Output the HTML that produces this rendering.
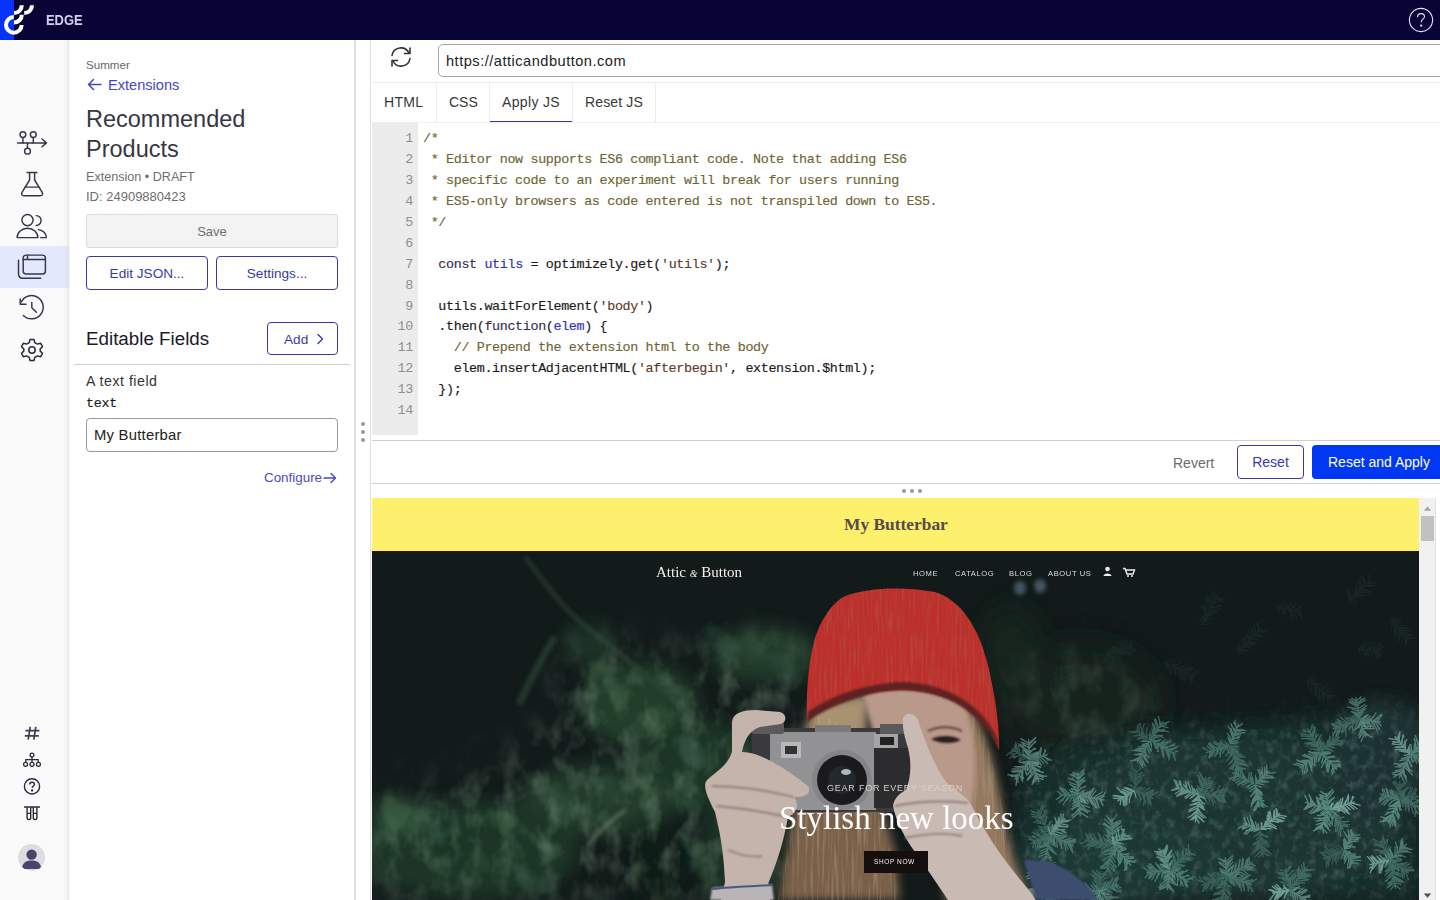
<!DOCTYPE html>
<html><head><meta charset="utf-8">
<style>
*{box-sizing:border-box;margin:0;padding:0}
html,body{width:1440px;height:900px;overflow:hidden;background:#fff;font-family:"Liberation Sans",sans-serif;position:relative}
.abs{position:absolute}
#hdr{left:0;top:0;width:1440px;height:40px;background:#080536}
#strip{left:0;top:0;width:14px;height:40px;background:#0632fa}
#edge{left:46px;top:11px;font-size:15px;line-height:17px;font-weight:bold;color:#d0d0ec;transform:scaleX(0.86);transform-origin:0 0}
#side{left:0;top:40px;width:70px;height:860px;background:linear-gradient(to right,#fafafa 0,#fafafa 63px,#f2f2f2 67px,#e8e8e8 69px,#ffffff 70px)}
#act{left:0;top:246px;width:69px;height:42px;background:linear-gradient(to right,#e3e8fc 0,#e3e8fc 64px,#dde0ec 69px)}
#panel{left:70px;top:40px;width:286px;height:860px;background:#fff;border-right:2px solid #e2e2e2}
.t{position:absolute;white-space:nowrap;line-height:1}
.btn{position:absolute;border:1.5px solid #3a3aa6;border-radius:4px;color:#3a3aa6;font-size:13px;text-align:center;background:#fff}
#main{left:356px;top:40px;width:1084px;height:860px;background:#fff}
.code{font-family:"Liberation Mono",monospace;font-size:12.8px}
.c{color:#6f6432}.v{color:#3030b4}.s{color:#5e3a2c}.k{color:#3a2d52}
</style></head><body>
<div id="hdr" class="abs"></div>
<div id="strip" class="abs"></div>
<div id="edge" class="abs">EDGE</div>

<div id="side" class="abs"></div>
<div id="act" class="abs"></div>
<div id="panel" class="abs"></div>
<!-- logo -->
<svg class="abs" style="left:0;top:0" width="40" height="40" viewBox="0 0 40 40" fill="none" stroke="#fff" stroke-width="4" stroke-linecap="butt">
<path d="M13.8 17.1 A7.8 7.8 0 1 0 21.6 24.9"/>
<path d="M14 22.5 A7.8 7.8 0 0 0 21.8 14.7"/>
<path d="M14 13.1 A7.8 7.8 0 0 0 21.8 5.3"/>
<path d="M24.2 13.1 A7.8 7.8 0 0 0 32 5.3"/>
</svg>
<svg class="abs" style="left:1405px;top:4px" width="32" height="32" viewBox="0 0 32 32" fill="none" stroke="#e2e2f6" stroke-width="1.1">
<circle cx="16" cy="16" r="11.6"/>
<path d="M12.6 13.2 C12.6 10.8 14.2 9.6 16.1 9.6 C18.1 9.6 19.5 10.9 19.5 12.7 C19.5 15 16.2 15.3 16.2 18.2"/>
<circle cx="16.2" cy="21.6" r="0.6" fill="#fff"/>
</svg>
<!-- sidebar icons -->
<svg class="abs" style="left:0;top:40px" width="70" height="860" viewBox="0 40 70 860" fill="none" stroke="#33354f" stroke-width="1.45" stroke-linecap="round" stroke-linejoin="round">
<path d="M17.5 142.9 H46.5 M42 139 L46.5 142.9 L42 146.8"/>
<circle cx="22.9" cy="134.6" r="2.9"/><path d="M22.9 137.5 V142.9"/>
<circle cx="33.3" cy="134.6" r="2.9"/><path d="M33.3 137.5 V142.9"/>
<circle cx="27.5" cy="151.2" r="2.9"/><path d="M27.5 142.9 V148.3"/>
<path d="M27.1 172.5 H36.9 M29.6 172.5 V180 L22 192.3 C21 194.2 21.8 195.8 24 195.8 H40.2 C42.4 195.8 43.2 194.2 42.2 192.3 L34.6 180 V172.5 M24.6 187.1 H39.6"/>
<circle cx="27.5" cy="220.1" r="5.6"/>
<path d="M17.1 237.6 A10.4 9.4 0 0 1 37.9 237.6 Z"/>
<path d="M36.2 215.6 A4.6 4.6 0 1 1 36.2 225.4"/>
<path d="M38.6 229.6 C43 230.3 46.4 233.5 46.4 237.6 H40.6"/>
<rect x="23.2" y="255.1" width="22.2" height="18.9" rx="3"/>
<path d="M23.2 259.5 H45.4 M27.5 255.1 V259.5"/>
<path d="M18.5 260.3 V273.5 C18.5 276.3 20 278.3 23 278.3 H40.7"/>
<path d="M21.2 302 A11.6 11.6 0 1 1 23.4 315.4"/>
<path d="M20.2 298.9 V304.2 H26"/>
<path d="M31.8 302.4 V307.8 L36.4 312.2"/>
</svg>
<svg class="abs" style="left:20px;top:338px" width="24" height="24" viewBox="0 0 24 24" fill="none" stroke="#2b2b40" stroke-width="1.5" stroke-linejoin="round">
<path d="M10 1.5 H14 L14.8 4.6 L17.4 6.1 L20.5 5.2 L22.5 8.7 L20.2 10.9 V13.1 L22.5 15.3 L20.5 18.8 L17.4 17.9 L14.8 19.4 L14 22.5 H10 L9.2 19.4 L6.6 17.9 L3.5 18.8 L1.5 15.3 L3.8 13.1 V10.9 L1.5 8.7 L3.5 5.2 L6.6 6.1 L9.2 4.6 Z"/>
<circle cx="12" cy="12" r="3.2"/>
</svg>
<svg class="abs" style="left:20px;top:722px" width="24" height="22" viewBox="0 0 24 22" fill="none" stroke="#3d3d5c" stroke-width="1.7"><path d="M10.2 4.8 L8.2 17.6 M15.8 4.8 L13.8 17.6 M5.4 8.6 H19.4 M4.8 13.8 H18.8"/></svg>
<svg class="abs" style="left:20px;top:750px" width="24" height="20" viewBox="0 0 24 20" fill="none" stroke="#2b2b40" stroke-width="1.3">
<circle cx="12" cy="5" r="1.9"/><path d="M12 6.9 V9.6 M5.8 12.3 V9.6 H18.2 V12.3 M12 9.6 V12.3"/>
<circle cx="5.6" cy="14.3" r="2"/><circle cx="12" cy="14.3" r="2"/><circle cx="18.4" cy="14.3" r="2"/>
</svg>
<svg class="abs" style="left:20px;top:774px" width="24" height="24" viewBox="0 0 24 24" fill="none" stroke="#2b2b40" stroke-width="1.4">
<circle cx="12" cy="12.4" r="7.6"/>
<path d="M9.6 10.6 C9.6 9 10.7 8.2 12 8.2 C13.4 8.2 14.4 9.1 14.4 10.3 C14.4 12 12.1 12.1 12.1 14"/>
<circle cx="12.1" cy="16.4" r="0.5" fill="#2b2b40"/>
</svg>
<svg class="abs" style="left:20px;top:802px" width="24" height="22" viewBox="0 0 24 22" fill="none" stroke="#2b2b40" stroke-width="1.4">
<path d="M4 5 H20 M7.1 5 V15.8 A1.8 1.8 0 0 0 10.7 15.8 V5 M13.3 5 V15.8 A1.8 1.8 0 0 0 16.9 15.8 V5 M7.1 11.4 H10.7 M13.3 11.4 H16.9"/>
</svg>
<svg class="abs" style="left:17px;top:843px" width="30" height="30" viewBox="0 0 30 30">
<defs><clipPath id="avc"><circle cx="14.6" cy="14.5" r="13.5"/></clipPath></defs>
<circle cx="14.6" cy="14.5" r="13.5" fill="#dedde2"/>
<g clip-path="url(#avc)" fill="#47446e"><circle cx="14.6" cy="11.6" r="5.2"/><path d="M5 26 C5 20 9 17.5 14.6 17.5 C20.2 17.5 24.2 20 24.2 26 Z"/></g>
</svg>


<!-- panel texts -->
<div class="t" style="left:86px;top:59px;font-size:11.6px;color:#666">Summer</div>
<svg class="abs" style="left:86px;top:77px" width="18" height="16" viewBox="0 0 18 16" fill="none" stroke="#4646c8" stroke-width="1.5" stroke-linecap="round" stroke-linejoin="round"><path d="M2.5 7.5 H15 M7.5 2.5 L2.5 7.5 L7.5 12.5"/></svg>
<div class="t" style="left:108px;top:78px;font-size:14.6px;color:#4646c8">Extensions</div>
<div class="t" style="left:86px;top:104px;font-size:23.5px;color:#363644;line-height:30px">Recommended<br>Products</div>
<div class="t" style="left:86px;top:171px;font-size:12.6px;color:#6e6e6e">Extension &bull; DRAFT</div>
<div class="t" style="left:86px;top:190px;font-size:13px;color:#6e6e6e">ID: 24909880423</div>
<div class="abs" style="left:86px;top:214px;width:252px;height:34px;background:#f3f3f3;border:1px solid #dcdcdc;border-radius:3px;color:#707070;font-size:13px;text-align:center;line-height:34px">Save</div>
<div class="btn" style="left:86px;top:256px;width:122px;height:34px;line-height:34px;font-size:13.6px">Edit JSON...</div>
<div class="btn" style="left:216px;top:256px;width:122px;height:34px;line-height:34px;font-size:13.6px">Settings...</div>
<div class="t" style="left:86px;top:330px;font-size:18.8px;color:#1a1a2a">Editable Fields</div>
<div class="btn" style="left:267px;top:322px;width:71px;height:33px"></div>
<div class="t" style="left:284px;top:333px;font-size:13.6px;color:#3a3aa6">Add</div>
<svg class="abs" style="left:315px;top:332px" width="11" height="14" viewBox="0 0 11 14" fill="none" stroke="#3a3aa6" stroke-width="1.4" stroke-linecap="round" stroke-linejoin="round"><path d="M3 2.5 L7.5 7 L3 11.5"/></svg>
<div class="abs" style="left:74px;top:364px;width:276px;height:1px;background:#cfcfcf"></div>
<div class="t" style="left:86px;top:374px;font-size:14.2px;letter-spacing:0.5px;color:#333">A text field</div>
<div class="t code" style="left:86px;top:396.5px;font-size:13.4px;letter-spacing:-0.3px;color:#1a1a1a;-webkit-text-stroke:0.15px currentColor">text</div>
<div class="abs" style="left:86px;top:418px;width:252px;height:34px;border:1px solid #999;border-radius:4px;font-size:14.8px;letter-spacing:0.25px;color:#222;padding-left:7px;line-height:32px">My Butterbar</div>
<div class="t" style="left:264px;top:471px;font-size:13.4px;color:#4a4ac0">Configure</div>
<svg class="abs" style="left:322px;top:471px" width="16" height="14" viewBox="0 0 16 14" fill="none" stroke="#4a4ac0" stroke-width="1.4" stroke-linecap="round" stroke-linejoin="round"><path d="M2 7 H13.5 M9 2.5 L13.5 7 L9 11.5"/></svg>


<!-- main -->
<div class="abs" style="left:370px;top:40px;width:1px;height:860px;background:#dfe1e1"></div>
<!-- refresh icon -->
<svg class="abs" style="left:388px;top:45px" width="26" height="24" viewBox="0 0 26 24" fill="none" stroke="#333" stroke-width="1.6" stroke-linecap="round" stroke-linejoin="round">
<path d="M4 10.5 A9 9 0 0 1 21 8"/><path d="M22 3 V8.5 H16.5"/>
<path d="M22 13.5 A9 9 0 0 1 5 16"/><path d="M4 21 V15.5 H9.5"/>
</svg>
<div class="abs" style="left:438px;top:44px;width:1010px;height:33px;border:1px solid #a5a5a5;border-radius:5px"></div>
<div class="t" style="left:446px;top:54px;font-size:14.6px;letter-spacing:0.5px;color:#222">https://atticandbutton.com</div>
<!-- tabs -->
<div class="abs" style="left:372px;top:82px;width:1068px;height:1px;background:#ececec"></div>
<div class="abs" style="left:436px;top:83px;width:1px;height:39px;background:#ececec"></div>
<div class="abs" style="left:489px;top:83px;width:1px;height:39px;background:#ececec"></div>
<div class="abs" style="left:572px;top:83px;width:1px;height:39px;background:#ececec"></div>
<div class="abs" style="left:655px;top:83px;width:1px;height:39px;background:#ececec"></div>
<div class="abs" style="left:372px;top:122px;width:1068px;height:1px;background:#f0f0f0"></div>
<div class="abs" style="left:490px;top:120.5px;width:82px;height:1.5px;background:#3a3aa6"></div>
<div class="t" style="left:384px;top:95px;font-size:14px;letter-spacing:0.3px;color:#383838">HTML</div>
<div class="t" style="left:449px;top:95px;font-size:14px;color:#383838">CSS</div>
<div class="t" style="left:502px;top:95px;font-size:14px;letter-spacing:0.35px;color:#383838">Apply JS</div>
<div class="t" style="left:585px;top:95px;font-size:14px;letter-spacing:0.15px;color:#383838">Reset JS</div>
<!-- editor -->
<div class="abs" style="left:372px;top:123px;width:46px;height:312px;background:#ececec"></div>
<div id="gut" class="abs code" style="left:372px;top:129.3px;width:41px;text-align:right;color:#8f8f8f;line-height:20.9px;font-size:13.4px;letter-spacing:-0.3px">1<br>2<br>3<br>4<br>5<br>6<br>7<br>8<br>9<br>10<br>11<br>12<br>13<br>14</div>
<pre id="src" class="abs code" style="left:423px;top:129.3px;color:#1a1a1a;line-height:20.9px;font-size:13.4px;letter-spacing:-0.36px;-webkit-text-stroke:0.15px currentColor"><span class="c">/*
 * Editor now supports ES6 compliant code. Note that adding ES6
 * specific code to an experiment will break for users running
 * ES5-only browsers as code entered is not transpiled down to ES5.
 */</span>

  <span class="k">const</span> <span class="v">utils</span> = optimizely.get(<span class="s">'utils'</span>);

  utils.waitForElement(<span class="s">'body'</span>)
  .then(<span class="k">function</span>(<span class="v">elem</span>) {
    <span class="c">// Prepend the extension html to the body</span>
    elem.insertAdjacentHTML(<span class="s">'afterbegin'</span>, extension.$html);
  });
</pre>
<!-- toolbar -->
<div class="abs" style="left:372px;top:440px;width:1068px;height:1px;background:#d0d0d0"></div>
<div class="abs" style="left:372px;top:483px;width:1068px;height:1px;background:#d0d0d0"></div>
<div class="t" style="left:1173px;top:456px;font-size:14px;color:#6b6b6b">Revert</div>
<div class="btn" style="left:1237px;top:445px;width:67px;height:34px;line-height:33px;font-size:14px">Reset</div>
<div class="abs" style="left:1312px;top:445px;width:140px;height:34px;background:#0037f0;border-radius:4px;color:#fff;font-size:14px;line-height:35px;padding-left:16px">Reset and Apply</div>
<!-- dots -->
<div class="abs" style="left:902px;top:489px;width:4px;height:4px;border-radius:2px;background:#9a9a9a"></div>
<div class="abs" style="left:910px;top:489px;width:4px;height:4px;border-radius:2px;background:#9a9a9a"></div>
<div class="abs" style="left:918px;top:489px;width:4px;height:4px;border-radius:2px;background:#9a9a9a"></div>
<div class="abs" style="left:361px;top:422px;width:4px;height:4px;border-radius:2px;background:#9a9a9a"></div>
<div class="abs" style="left:361px;top:430px;width:4px;height:4px;border-radius:2px;background:#9a9a9a"></div>
<div class="abs" style="left:361px;top:438px;width:4px;height:4px;border-radius:2px;background:#9a9a9a"></div>
<!-- preview -->
<div class="abs" style="left:372px;top:498px;width:1047px;height:53px;background:#fcf06c"></div>
<div class="t" style="left:844px;top:515.5px;font-family:'Liberation Serif',serif;font-size:17.4px;font-weight:bold;color:#574a4a">My Butterbar</div>
<div id="photo" class="abs" style="left:372px;top:551px;width:1047px;height:349px;background:#0f1819;overflow:hidden"></div>
<svg id="psvg" class="abs" style="left:372px;top:551px" width="1047" height="349" viewBox="372 551 1047 349">
<defs>
<filter id="b5" filterUnits="userSpaceOnUse" x="372" y="551" width="1047" height="349"><feGaussianBlur stdDeviation="5"/></filter>
<filter id="b16" filterUnits="userSpaceOnUse" x="300" y="480" width="1200" height="500"><feGaussianBlur stdDeviation="16"/></filter>
<filter id="b9" filterUnits="userSpaceOnUse" x="300" y="480" width="1200" height="500"><feGaussianBlur stdDeviation="9"/></filter>
<filter id="b2" filterUnits="userSpaceOnUse" x="372" y="551" width="1047" height="349"><feGaussianBlur stdDeviation="2"/></filter>
<filter id="b05" filterUnits="userSpaceOnUse" x="372" y="551" width="1047" height="349"><feGaussianBlur stdDeviation="0.6"/></filter>
<filter id="b1" filterUnits="userSpaceOnUse" x="372" y="551" width="1047" height="349"><feGaussianBlur stdDeviation="0.8"/></filter>
<filter id="needL" filterUnits="userSpaceOnUse" x="372" y="551" width="1047" height="349">
<feGaussianBlur in="SourceAlpha" stdDeviation="20" result="m"/>
<feTurbulence type="fractalNoise" baseFrequency="0.05 0.035" numOctaves="3" seed="7" result="n"/>
<feColorMatrix in="n" type="matrix" values="0 0 0 0 0.20  0 0 0 0 0.33  0 0 0 0 0.21  0 0 0 1.0 -0.42" result="c"/>
<feComposite in="c" in2="m" operator="in"/>
</filter>
<filter id="needR" filterUnits="userSpaceOnUse" x="372" y="551" width="1047" height="349">
<feGaussianBlur in="SourceAlpha" stdDeviation="16" result="m"/>
<feTurbulence type="fractalNoise" baseFrequency="0.12 0.1" numOctaves="3" seed="11" result="n"/>
<feColorMatrix in="n" type="matrix" values="0 0 0 0 0.20  0 0 0 0 0.34  0 0 0 0 0.31  0 0 0 0.8 -0.38" result="c"/>
<feComposite in="c" in2="m" operator="in"/>
</filter>
<filter id="knit" filterUnits="userSpaceOnUse" x="800" y="580" width="210" height="170">
<feTurbulence type="fractalNoise" baseFrequency="0.45 0.03" numOctaves="2" seed="2" result="n"/>
<feColorMatrix in="n" type="matrix" values="0 0 0 0 0.42  0 0 0 0 0.1  0 0 0 0 0.08  0 0 0 1.4 -0.62" result="c"/>
<feComposite in="c" in2="SourceAlpha" operator="in"/>
</filter>
<filter id="hairtx" filterUnits="userSpaceOnUse" x="760" y="680" width="300" height="220">
<feTurbulence type="fractalNoise" baseFrequency="0.35 0.02" numOctaves="2" seed="4" result="n"/>
<feColorMatrix in="n" type="matrix" values="0 0 0 0 0.75  0 0 0 0 0.62  0 0 0 0 0.48  0 0 0 1.5 -0.7" result="c"/>
<feComposite in="c" in2="SourceAlpha" operator="in"/>
</filter>
</defs>
<rect x="372" y="551" width="1047" height="349" fill="#121a1a"/>
<!-- left pine masses -->
<g filter="url(#b9)">
<ellipse cx="640" cy="705" rx="58" ry="42" fill="#223d2b"/>
<ellipse cx="765" cy="655" rx="55" ry="28" fill="#213b2b"/>
<ellipse cx="700" cy="765" rx="60" ry="45" fill="#1e3627"/>
<ellipse cx="590" cy="645" rx="28" ry="22" fill="#1b3025"/>
<ellipse cx="600" cy="800" rx="80" ry="35" fill="#203a2a"/>
<ellipse cx="470" cy="850" rx="110" ry="50" fill="#1c3427"/>
<ellipse cx="398" cy="815" rx="24" ry="16" fill="#33573a"/>
<ellipse cx="655" cy="860" rx="25" ry="45" fill="#111a16"/>
<ellipse cx="740" cy="850" rx="40" ry="55" fill="#1b3126"/>
</g>
<g filter="url(#needL)"><path d="M575 640 C620 650 690 660 760 640 C800 640 812 680 800 720 L790 900 L372 900 L372 800 C430 790 500 770 540 740 C560 700 565 660 575 640 Z" fill="#000"/></g>
<g id="lneedles" stroke-linecap="round" fill="none" filter="url(#b2)"><path d="M603.5 678.2L626.5 701.8M603.7 678.5L611.2 679.0M603.7 678.5L602.3 685.6M605.1 679.8L613.7 678.9M605.1 679.8L603.1 687.4M607.3 682.1L617.5 679.4M607.3 682.1L609.2 692.8M609.0 683.9L618.1 679.8M609.0 683.9L609.3 692.1M610.4 685.3L619.7 686.2M610.4 685.3L607.6 692.1M612.4 687.3L619.5 684.7M612.4 687.3L611.2 695.3M614.2 689.2L626.7 688.1M614.2 689.2L612.8 697.3M616.1 691.1L627.0 687.2M616.1 691.1L615.1 701.1M617.9 693.0L631.1 693.8M617.9 693.0L617.4 700.3M619.8 694.9L627.7 693.8M619.8 694.9L615.6 705.6M621.6 696.8L633.4 694.8M621.6 696.8L621.2 708.6M623.5 698.7L629.0 694.6M623.5 698.7L618.8 706.3" stroke="#37583f" opacity="0.59" stroke-width="2.0"/>
<path d="M647.6 710.5L672.4 719.5M647.9 710.6L652.4 707.4M647.9 710.6L650.6 716.4M650.2 711.4L659.0 705.5M650.2 711.4L652.3 721.4M652.2 712.2L662.4 708.8M652.2 712.2L656.8 721.4M655.4 713.3L667.0 709.3M655.4 713.3L656.8 720.8M657.0 713.9L663.2 703.9M657.0 713.9L660.0 724.6M659.6 714.9L667.4 711.7M659.6 714.9L664.6 727.8M662.4 715.9L670.5 712.5M662.4 715.9L668.1 724.5M664.3 716.6L673.6 711.5M664.3 716.6L670.2 727.6M667.6 717.8L674.9 711.7M667.6 717.8L671.1 723.1M670.0 718.6L674.7 715.1M670.0 718.6L671.4 727.9" stroke="#37583f" opacity="0.53" stroke-width="2.0"/>
<path d="M674.1 737.9L705.9 762.1M674.0 737.8L682.5 738.3M674.0 737.8L674.0 744.5M675.8 739.2L684.5 734.9M675.8 739.2L674.2 747.0M677.8 740.7L683.1 738.0M677.8 740.7L679.7 746.9M680.1 742.5L690.8 738.6M680.1 742.5L678.5 751.1M682.4 744.2L690.3 741.3M682.4 744.2L686.1 755.9M684.1 745.5L693.0 741.0M684.1 745.5L682.0 753.1M686.6 747.4L695.8 744.7M686.6 747.4L683.6 755.9M688.5 748.9L701.5 746.8M688.5 748.9L687.2 757.9M690.4 750.3L697.3 744.7M690.4 750.3L689.5 758.5M692.4 751.8L699.5 747.5M692.4 751.8L689.9 764.7M694.7 753.6L705.8 750.0M694.7 753.6L691.8 762.3M697.1 755.4L707.7 753.4M697.1 755.4L698.1 765.9M699.0 756.8L705.7 753.5M699.0 756.8L697.1 767.5M701.2 758.5L706.0 754.0M701.2 758.5L700.1 766.4M702.7 759.7L709.8 759.2M702.7 759.7L700.3 767.8" stroke="#2f5040" opacity="0.59" stroke-width="2.0"/>
<path d="M627.0 755.4L653.0 764.6M627.4 755.5L632.7 752.6M627.4 755.5L627.2 761.9M629.3 756.2L634.1 749.9M629.3 756.2L631.0 761.7M631.9 757.1L639.8 749.8M631.9 757.1L636.2 768.0M634.0 757.9L642.5 749.3M634.0 757.9L638.5 765.6M636.4 758.7L648.5 753.6M636.4 758.7L638.6 765.7M639.2 759.7L649.0 755.3M639.2 759.7L641.5 768.8M642.0 760.7L650.1 753.1M642.0 760.7L642.0 771.4M644.6 761.6L651.6 752.9M644.6 761.6L646.2 772.1M646.8 762.4L653.3 755.2M646.8 762.4L646.9 769.9M649.1 763.2L654.4 755.2M649.1 763.2L647.6 772.4" stroke="#37583f" opacity="0.61" stroke-width="2.0"/>
<path d="M669.4 792.2L690.6 807.8M669.5 792.3L676.9 790.9M669.5 792.3L669.6 801.9M671.5 793.8L679.9 791.9M671.5 793.8L670.8 799.8M673.6 795.3L684.9 793.3M673.6 795.3L674.2 802.3M675.7 796.8L684.5 792.7M675.7 796.8L677.1 807.3M678.1 798.6L685.8 798.2M678.1 798.6L680.5 810.4M679.8 799.8L688.2 797.7M679.8 799.8L678.7 811.3M681.8 801.3L692.0 799.5M681.8 801.3L682.2 812.3M683.8 802.8L694.6 801.2M683.8 802.8L681.8 813.4M686.5 804.8L697.1 803.3M686.5 804.8L684.5 812.5M688.6 806.3L698.8 805.9M688.6 806.3L690.8 815.4" stroke="#2a4636" opacity="0.61" stroke-width="2.0"/>
<path d="M589.4 662.9L610.6 677.1M589.5 663.1L598.3 661.3M589.5 663.1L590.9 669.8M591.8 664.6L600.5 662.1M591.8 664.6L591.1 674.6M593.9 666.0L603.1 660.4M593.9 666.0L592.1 674.9M595.6 667.1L603.1 664.9M595.6 667.1L596.2 677.4M597.7 668.5L604.1 663.6M597.7 668.5L598.4 678.2M599.9 670.0L607.9 667.5M599.9 670.0L602.0 680.3M602.2 671.5L608.7 666.7M602.2 671.5L601.2 679.4M604.8 673.2L615.5 667.1M604.8 673.2L605.2 683.4M606.6 674.3L612.1 670.2M606.6 674.3L605.9 685.7" stroke="#37583f" opacity="0.61" stroke-width="2.0"/>
<path d="M736.8 643.7L763.2 656.3M737.0 643.8L743.4 638.0M737.0 643.8L740.1 650.5M738.7 644.6L746.6 641.0M738.7 644.6L740.0 653.4M741.3 645.9L748.7 640.5M741.3 645.9L741.7 655.5M744.0 647.1L749.8 643.4M744.0 647.1L743.9 655.4M746.1 648.1L755.0 644.6M746.1 648.1L751.6 659.8M748.6 649.3L759.1 644.6M748.6 649.3L745.8 662.2M750.5 650.2L757.5 646.1M750.5 650.2L750.1 661.4M752.9 651.4L759.7 647.6M752.9 651.4L751.6 662.1M755.6 652.7L764.8 647.2M755.6 652.7L757.3 663.6M757.7 653.7L763.9 651.5M757.7 653.7L759.9 662.0M760.6 655.1L767.8 647.1M760.6 655.1L760.5 665.4" stroke="#2a4636" opacity="0.66" stroke-width="2.0"/>
<path d="M768.7 654.0L791.3 676.0M768.4 653.7L773.9 652.0M768.4 653.7L765.1 661.3M770.2 655.5L779.6 652.6M770.2 655.5L770.1 662.8M772.1 657.3L781.5 655.9M772.1 657.3L769.5 667.0M774.5 659.6L781.8 659.1M774.5 659.6L772.9 667.9M776.1 661.2L785.6 656.0M776.1 661.2L773.0 668.8M777.8 662.9L788.5 663.6M777.8 662.9L775.4 674.6M779.9 664.9L788.1 664.9M779.9 664.9L781.5 674.7M781.9 666.8L789.5 661.9M781.9 666.8L777.3 675.6M783.5 668.4L795.3 664.2M783.5 668.4L779.0 679.8M785.7 670.5L795.7 666.2M785.7 670.5L785.4 678.0M787.5 672.3L797.1 668.9M787.5 672.3L784.7 681.6M789.2 674.0L797.4 671.8M789.2 674.0L787.4 683.6" stroke="#2f5040" opacity="0.46" stroke-width="2.0"/>
<path d="M707.2 626.5L732.8 653.5M707.0 626.3L713.0 623.7M707.0 626.3L704.3 632.2M708.7 628.2L716.0 627.9M708.7 628.2L708.1 636.4M711.1 630.6L719.0 627.9M711.1 630.6L708.3 637.8M712.5 632.1L719.8 629.6M712.5 632.1L711.5 640.4M714.3 634.0L724.1 631.9M714.3 634.0L709.4 644.6M716.2 636.0L728.8 637.0M716.2 636.0L716.6 646.4M718.0 637.9L729.8 636.8M718.0 637.9L714.8 648.6M719.9 639.9L733.0 639.1M719.9 639.9L715.6 651.6M721.3 641.3L730.3 638.6M721.3 641.3L719.6 652.5M723.5 643.7L736.7 641.3M723.5 643.7L719.9 653.7M725.3 645.5L734.4 643.8M725.3 645.5L719.7 656.1M727.1 647.5L738.5 644.3M727.1 647.5L723.7 657.4M728.9 649.4L735.6 648.2M728.9 649.4L724.8 656.3M730.3 650.8L737.5 650.5M730.3 650.8L727.5 657.5" stroke="#2f5040" opacity="0.47" stroke-width="2.0"/>
<path d="M414.4 822.9L445.6 837.1M414.6 823.0L423.1 820.5M414.6 823.0L416.9 829.5M416.8 824.0L423.3 819.1M416.8 824.0L417.3 831.6M419.5 825.2L427.2 817.2M419.5 825.2L419.5 833.9M421.4 826.1L428.9 818.3M421.4 826.1L423.8 834.5M423.6 827.1L435.8 823.8M423.6 827.1L422.2 838.6M425.8 828.1L435.5 819.7M425.8 828.1L425.1 836.9M428.5 829.3L437.3 819.8M428.5 829.3L431.6 842.2M430.6 830.3L439.5 823.0M430.6 830.3L434.1 838.7M433.0 831.4L438.0 824.7M433.0 831.4L435.2 842.1M436.0 832.7L443.9 824.4M436.0 832.7L436.8 839.7M437.7 833.5L448.3 829.9M437.7 833.5L440.6 842.1M440.4 834.7L446.4 829.7M440.4 834.7L442.5 846.0M442.9 835.9L448.7 833.1M442.9 835.9L442.8 845.3" stroke="#2f5040" opacity="0.72" stroke-width="2.0"/>
<path d="M474.9 848.1L485.1 871.9M474.8 848.0L482.5 847.7M474.8 848.0L470.9 856.8M476.0 850.8L482.8 853.4M476.0 850.8L472.3 857.1M476.9 852.7L484.3 854.8M476.9 852.7L473.1 859.9M478.1 855.7L487.0 857.4M478.1 855.7L473.3 861.8M478.8 857.3L487.3 858.3M478.8 857.3L472.2 866.3M479.8 859.6L488.4 861.6M479.8 859.6L474.2 872.8M481.0 862.3L493.2 864.8M481.0 862.3L474.5 869.4M482.0 864.7L492.2 869.3M482.0 864.7L473.1 870.9M483.1 867.3L490.7 870.5M483.1 867.3L478.7 874.4" stroke="#37583f" opacity="0.45" stroke-width="2.0"/>
<path d="M518.1 866.1L541.9 893.9M517.8 865.9L525.3 864.5M517.8 865.9L516.7 871.5M519.9 868.3L528.2 864.5M519.9 868.3L515.9 877.7M521.5 870.2L528.8 869.6M521.5 870.2L518.6 877.3M523.4 872.4L530.6 871.9M523.4 872.4L518.2 882.7M524.9 874.0L533.1 872.7M524.9 874.0L517.5 883.1M526.6 876.1L535.5 877.7M526.6 876.1L521.9 885.8M528.4 878.2L536.6 878.7M528.4 878.2L529.7 892.4M530.2 880.3L542.3 876.6M530.2 880.3L525.6 891.4M531.8 882.1L542.5 882.8M531.8 882.1L531.4 893.5M533.1 883.6L543.7 881.2M533.1 883.6L531.4 890.9M535.1 886.0L545.3 888.1M535.1 886.0L532.6 896.2M536.8 887.9L545.7 886.0M536.8 887.9L529.7 896.6M538.3 889.7L549.1 888.8M538.3 889.7L535.8 897.6M540.4 892.0L549.3 890.5M540.4 892.0L535.6 899.1" stroke="#2f5040" opacity="0.63" stroke-width="2.0"/>
<path d="M603.8 777.0L616.2 803.0M603.7 776.7L612.7 775.3M603.7 776.7L599.5 780.5M605.1 779.7L615.5 781.2M605.1 779.7L597.5 785.3M606.2 782.0L615.3 784.0M606.2 782.0L602.8 789.9M607.0 783.7L613.8 786.5M607.0 783.7L600.3 790.1M608.2 786.2L616.3 784.9M608.2 786.2L603.1 795.4M609.2 788.4L618.9 787.7M609.2 788.4L604.8 797.1M610.3 790.7L624.2 791.3M610.3 790.7L604.5 801.9M611.4 793.0L623.8 797.4M611.4 793.0L607.9 804.3M612.8 795.8L625.1 796.1M612.8 795.8L606.1 801.2M614.0 798.4L622.3 796.6M614.0 798.4L606.4 806.8M615.1 800.7L625.1 801.5M615.1 800.7L612.4 807.2" stroke="#2a4636" opacity="0.71" stroke-width="2.0"/>
<path d="M692.6 845.8L707.4 874.2M692.6 845.7L700.4 846.5M692.6 845.7L689.8 854.6M693.9 848.2L699.8 849.9M693.9 848.2L688.0 854.1M695.0 850.4L702.1 853.4M695.0 850.4L692.1 856.3M696.1 852.5L704.2 851.4M696.1 852.5L691.0 863.0M697.6 855.5L708.7 859.6M697.6 855.5L692.0 864.0M698.5 857.0L708.2 858.0M698.5 857.0L691.5 865.3M699.8 859.6L711.3 859.0M699.8 859.6L691.3 869.9M700.9 861.6L711.5 861.1M700.9 861.6L691.8 871.0M702.1 864.0L713.0 864.2M702.1 864.0L698.0 874.2M703.5 866.7L711.1 868.0M703.5 866.7L701.9 876.2M704.6 868.8L715.2 869.4M704.6 868.8L701.0 877.5M705.8 871.2L712.3 870.2M705.8 871.2L703.8 878.3" stroke="#37583f" opacity="0.69" stroke-width="2.0"/>
<path d="M386.0 798.5L404.0 825.5M386.0 798.5L392.9 797.8M386.0 798.5L383.9 806.4M387.5 800.8L395.5 800.4M387.5 800.8L381.7 809.4M388.7 802.5L395.4 801.6M388.7 802.5L382.7 812.0M390.1 804.6L397.0 804.9M390.1 804.6L385.1 815.2M392.0 807.6L405.1 806.8M392.0 807.6L388.9 814.7M393.4 809.6L402.4 808.8M393.4 809.6L387.7 822.0M394.5 811.3L408.9 814.4M394.5 811.3L386.8 823.1M396.3 814.0L408.7 809.2M396.3 814.0L390.7 822.4M397.3 815.5L409.6 814.9M397.3 815.5L391.8 823.6M399.0 818.1L408.5 816.3M399.0 818.1L395.4 826.9M400.5 820.2L408.2 819.4M400.5 820.2L394.4 827.1M402.0 822.5L411.1 822.5M402.0 822.5L401.2 828.6" stroke="#37583f" opacity="0.68" stroke-width="2.0"/>
<path d="M551.8 783.8L568.2 816.2M551.9 784.0L558.3 782.1M551.9 784.0L548.8 792.7M552.9 785.9L558.7 785.6M552.9 785.9L550.7 791.3M553.9 788.1L561.5 787.4M553.9 788.1L550.8 793.9M555.4 790.9L565.1 794.0M555.4 790.9L553.6 798.7M556.6 793.2L568.5 794.7M556.6 793.2L553.9 801.7M557.5 795.1L568.3 797.7M557.5 795.1L549.4 805.6M558.7 797.5L567.7 798.6M558.7 797.5L549.8 808.2M560.2 800.3L568.3 802.8M560.2 800.3L556.5 807.8M561.1 802.2L570.4 804.1M561.1 802.2L558.0 812.5M562.2 804.3L570.0 803.7M562.2 804.3L558.9 811.9M563.6 807.0L574.5 807.0M563.6 807.0L561.7 815.8M564.5 808.9L573.8 809.1M564.5 808.9L560.0 815.9M565.8 811.4L575.9 815.0M565.8 811.4L561.2 819.8M566.9 813.6L577.2 815.2M566.9 813.6L562.2 822.8" stroke="#2f5040" opacity="0.68" stroke-width="2.0"/>
<path d="M733.0 754.5L747.0 785.5M733.1 754.6L740.1 756.6M733.1 754.6L728.6 760.0M734.2 757.1L742.4 756.9M734.2 757.1L730.7 765.1M735.1 759.0L743.6 760.8M735.1 759.0L730.1 762.4M736.2 761.6L743.2 761.8M736.2 761.6L728.2 768.2M737.4 764.2L744.4 765.4M737.4 764.2L731.6 771.6M738.2 766.0L747.4 768.2M738.2 766.0L731.8 772.5M739.4 768.6L750.1 771.7M739.4 768.6L732.1 778.8M740.7 771.5L755.0 773.2M740.7 771.5L733.0 777.7M741.7 773.8L749.1 775.2M741.7 773.8L735.6 782.2M742.6 775.7L753.3 778.8M742.6 775.7L738.4 783.9M743.8 778.4L750.7 781.7M743.8 778.4L737.9 788.9M744.8 780.7L751.6 783.9M744.8 780.7L742.2 789.7M745.7 782.7L753.6 784.3M745.7 782.7L738.5 790.1" stroke="#2a4636" opacity="0.61" stroke-width="2.0"/>
<path d="M488.3 812.1L511.7 827.9M488.2 812.0L492.9 809.3M488.2 812.0L488.0 817.4M490.2 813.4L496.0 811.0M490.2 813.4L492.1 821.6M492.6 815.0L502.4 811.0M492.6 815.0L491.2 823.2M494.8 816.5L503.1 812.8M494.8 816.5L493.1 827.9M496.6 817.7L508.9 813.5M496.6 817.7L497.6 825.6M498.9 819.2L507.6 818.4M498.9 819.2L498.6 828.5M501.2 820.8L508.6 817.7M501.2 820.8L502.3 830.5M503.0 822.0L516.3 819.0M503.0 822.0L503.5 832.4M505.4 823.7L511.2 819.6M505.4 823.7L504.4 834.0M507.5 825.0L517.3 818.9M507.5 825.0L506.5 835.2" stroke="#37583f" opacity="0.64" stroke-width="2.0"/></g>
<g filter="url(#b2)" fill="none">
<path d="M525 557 C550 590 565 610 586 627 C610 645 640 670 678 704 C690 715 700 725 708 734" stroke="#2f4937" stroke-width="3.5" opacity="0.8"/>
<path d="M555 637 C540 660 528 685 519 704" stroke="#2b4633" stroke-width="7" opacity="0.7"/>
<path d="M588 845 C600 830 612 818 626 810" stroke="#7d8d7c" stroke-width="3" opacity="0.7"/>
</g>
<g filter="url(#b16)">
<ellipse cx="1080" cy="700" rx="80" ry="55" fill="#16241f"/>
<ellipse cx="1010" cy="650" rx="25" ry="45" fill="#15261f"/>
</g>
<g filter="url(#needL)" opacity="0.6"><ellipse cx="1080" cy="700" rx="70" ry="50" fill="#000"/></g>
<!-- right pine masses -->
<g filter="url(#b9)">
<path d="M1020 780 C1060 745 1120 725 1200 728 C1280 722 1360 712 1419 705 L1419 900 L1010 900 Z" fill="#182d2a"/>
<ellipse cx="1230" cy="820" rx="170" ry="80" fill="#1d3632"/>
<ellipse cx="1120" cy="860" rx="100" ry="45" fill="#1f3934"/>
<ellipse cx="1380" cy="760" rx="50" ry="60" fill="#1b3131"/>
</g>
<g filter="url(#needR)"><path d="M1020 765 C1070 735 1150 722 1250 726 C1330 716 1400 706 1419 714 L1419 900 L1005 900 Z" fill="#000"/></g>
<g id="needles" stroke-linecap="round" fill="none" filter="url(#b05)"><path d="M1134.2 790.5L1117.8 800.9M1134.2 790.5L1136.0 797.0M1134.2 790.5L1126.6 787.6M1132.5 791.6L1129.1 799.7M1132.5 791.6L1124.3 787.7M1130.6 792.8L1129.2 802.5M1130.6 792.8L1122.8 789.3M1128.8 793.9L1125.8 799.9M1128.8 793.9L1122.3 791.3M1127.3 794.9L1126.7 804.7M1127.3 794.9L1120.8 792.1M1125.9 795.7L1125.0 806.0M1125.9 795.7L1117.0 787.8M1124.3 796.8L1123.6 805.1M1124.3 796.8L1115.3 795.5M1122.5 797.9L1123.7 805.3M1122.5 797.9L1113.1 795.5M1120.9 798.9L1120.2 804.6M1120.9 798.9L1113.1 798.1" stroke="#6a9c92" opacity="0.95" stroke-width="1.3"/>
<path d="M1135.1 789.0L1136.1 769.2M1135.1 788.9L1130.6 784.7M1135.1 788.9L1140.5 787.0M1135.1 787.3L1128.7 784.8M1135.1 787.3L1139.3 781.3M1135.3 784.9L1131.8 779.5M1135.3 784.9L1141.1 780.7M1135.4 783.0L1130.1 778.1M1135.4 783.0L1141.9 778.5M1135.5 780.8L1129.0 772.3M1135.5 780.8L1141.6 776.0M1135.6 779.1L1128.9 775.1M1135.6 779.1L1140.8 774.1M1135.7 777.3L1129.2 771.2M1135.7 777.3L1143.8 775.4M1135.8 775.3L1130.5 768.9M1135.8 775.3L1142.1 772.7M1135.9 773.0L1132.0 766.8M1135.9 773.0L1140.7 768.2" stroke="#446e64" opacity="0.64" stroke-width="1.3"/>
<path d="M1135.9 790.4L1153.2 798.3M1136.0 790.5L1140.7 787.7M1136.0 790.5L1138.6 795.4M1137.8 791.3L1142.0 787.2M1137.8 791.3L1141.6 799.4M1139.4 792.0L1144.5 788.0M1139.4 792.0L1140.5 800.8M1141.5 793.0L1149.8 788.1M1141.5 793.0L1144.5 800.4M1143.4 793.8L1153.4 789.7M1143.4 793.8L1145.9 803.1M1145.1 794.6L1154.6 790.4M1145.1 794.6L1143.6 805.3M1146.8 795.4L1152.7 792.1M1146.8 795.4L1148.9 803.9M1148.5 796.1L1154.6 793.0M1148.5 796.1L1150.0 802.9M1150.1 796.9L1157.7 791.8M1150.1 796.9L1151.1 805.7" stroke="#446e64" opacity="0.75" stroke-width="1.3"/>
<path d="M1198.8 794.6L1175.8 787.5M1198.8 794.6L1196.0 798.7M1198.8 794.6L1196.5 789.3M1196.9 794.0L1189.9 798.5M1196.9 794.0L1194.0 788.6M1194.7 793.4L1190.4 798.1M1194.7 793.4L1192.1 787.4M1193.2 792.9L1185.9 798.3M1193.2 792.9L1191.7 786.0M1191.2 792.3L1184.9 797.2M1191.2 792.3L1188.2 782.4M1189.6 791.8L1180.1 794.8M1189.6 791.8L1183.6 784.9M1187.3 791.1L1176.6 796.3M1187.3 791.1L1185.7 782.0M1185.3 790.5L1178.7 794.1M1185.3 790.5L1179.1 783.9M1183.2 789.8L1177.0 795.7M1183.2 789.8L1178.9 781.4M1181.9 789.4L1175.2 793.7M1181.9 789.4L1180.0 780.7M1179.6 788.7L1173.3 790.1M1179.6 788.7L1175.9 780.4M1177.9 788.2L1171.5 790.3M1177.9 788.2L1174.2 779.9" stroke="#78a89e" opacity="0.76" stroke-width="1.3"/>
<path d="M1200.3 794.2L1205.5 777.2M1200.2 794.2L1197.5 787.9M1200.2 794.2L1207.9 793.1M1200.8 792.4L1198.1 786.7M1200.8 792.4L1208.2 790.6M1201.4 790.3L1197.3 785.8M1201.4 790.3L1210.9 787.3M1202.1 788.3L1198.7 780.2M1202.1 788.3L1210.9 785.0M1202.6 786.4L1198.7 779.1M1202.6 786.4L1212.4 781.8M1203.2 784.5L1197.8 775.3M1203.2 784.5L1209.8 780.9M1203.8 782.6L1200.8 775.2M1203.8 782.6L1209.6 777.3M1204.3 781.0L1199.5 772.4M1204.3 781.0L1210.3 777.9" stroke="#4e7c72" opacity="0.67" stroke-width="1.3"/>
<path d="M1201.2 795.0L1226.0 795.9M1201.3 795.0L1206.8 791.2M1201.3 795.0L1206.5 800.8M1203.6 795.1L1207.6 787.9M1203.6 795.1L1206.8 803.2M1205.6 795.2L1213.0 789.4M1205.6 795.2L1209.6 801.0M1207.3 795.2L1213.0 788.7M1207.3 795.2L1212.7 801.5M1209.5 795.3L1217.1 790.8M1209.5 795.3L1213.5 804.8M1211.1 795.4L1217.0 790.9M1211.1 795.4L1215.2 802.6M1212.9 795.4L1220.9 789.9M1212.9 795.4L1219.0 800.5M1214.9 795.5L1219.8 785.5M1214.9 795.5L1220.3 801.3M1217.2 795.6L1223.5 788.1M1217.2 795.6L1222.0 802.4M1219.1 795.6L1224.1 788.9M1219.1 795.6L1226.0 802.3M1221.3 795.7L1226.1 788.5M1221.3 795.7L1224.0 802.5M1222.8 795.8L1227.3 789.6M1222.8 795.8L1225.5 801.5" stroke="#446e64" opacity="0.79" stroke-width="1.3"/>
<path d="M1199.8 796.3L1195.4 821.6M1199.8 795.9L1205.2 798.7M1199.8 795.9L1194.5 799.3M1199.4 798.4L1202.3 803.2M1199.4 798.4L1192.8 800.7M1199.1 799.9L1204.6 804.0M1199.1 799.9L1192.8 801.3M1198.8 801.9L1203.1 806.5M1198.8 801.9L1191.4 804.9M1198.5 803.9L1203.4 807.8M1198.5 803.9L1190.1 805.0M1198.1 805.7L1204.6 809.9M1198.1 805.7L1189.1 809.9M1197.7 808.2L1202.1 814.8M1197.7 808.2L1188.9 811.7M1197.4 810.1L1205.8 817.8M1197.4 810.1L1190.8 816.2M1197.0 812.1L1203.3 817.9M1197.0 812.1L1188.0 817.7M1196.6 814.3L1203.2 821.0M1196.6 814.3L1191.9 818.2M1196.4 815.8L1204.2 821.9M1196.4 815.8L1191.6 819.2M1196.1 817.7L1199.1 823.1M1196.1 817.7L1190.4 819.9" stroke="#78a89e" opacity="0.84" stroke-width="1.3"/>
<path d="M1255.2 785.1L1259.1 807.2M1255.2 784.9L1261.1 787.2M1255.2 784.9L1248.9 788.7M1255.6 787.3L1262.0 792.7M1255.6 787.3L1250.0 791.3M1255.9 789.1L1262.5 795.1M1255.9 789.1L1251.4 796.0M1256.3 791.2L1262.1 795.5M1256.3 791.2L1250.5 796.3M1256.6 793.0L1262.2 798.3M1256.6 793.0L1252.3 800.5M1257.0 795.2L1262.9 801.1M1257.0 795.2L1251.3 803.6M1257.3 797.2L1264.5 805.3M1257.3 797.2L1250.7 806.6M1257.6 798.7L1264.0 800.9M1257.6 798.7L1251.3 804.4M1258.0 801.1L1262.8 805.9M1258.0 801.1L1253.5 810.3M1258.3 802.4L1267.1 806.6M1258.3 802.4L1253.5 810.5M1258.6 804.6L1264.0 807.5M1258.6 804.6L1255.1 810.4" stroke="#5a8c82" opacity="0.87" stroke-width="1.3"/>
<path d="M1253.9 783.5L1232.7 772.7M1253.7 783.4L1246.3 786.5M1253.7 783.4L1252.5 777.4M1252.2 782.6L1247.6 787.5M1252.2 782.6L1251.0 776.5M1250.2 781.5L1242.1 785.2M1250.2 781.5L1251.4 772.7M1248.3 780.6L1240.6 783.5M1248.3 780.6L1249.3 772.8M1246.7 779.8L1239.3 783.0M1246.7 779.8L1243.1 774.1M1245.1 778.9L1237.8 785.3M1245.1 778.9L1241.7 771.6M1243.3 778.0L1235.8 783.0M1243.3 778.0L1241.7 769.4M1241.3 777.0L1234.4 780.7M1241.3 777.0L1239.5 767.3M1239.4 776.1L1229.4 778.7M1239.4 776.1L1237.0 766.5M1238.1 775.4L1232.6 780.4M1238.1 775.4L1235.1 769.2M1236.5 774.6L1230.4 779.7M1236.5 774.6L1235.9 765.5" stroke="#4e7c72" opacity="0.84" stroke-width="1.3"/>
<path d="M1255.7 783.4L1268.9 771.2M1255.9 783.2L1255.7 777.4M1255.9 783.2L1263.8 784.6M1257.3 781.9L1255.4 775.5M1257.3 781.9L1266.1 782.1M1258.9 780.4L1261.9 771.1M1258.9 780.4L1268.0 782.1M1259.9 779.5L1259.9 769.3M1259.9 779.5L1269.0 782.1M1261.5 778.0L1257.7 769.4M1261.5 778.0L1271.8 778.2M1262.7 776.9L1262.1 766.9M1262.7 776.9L1274.2 778.0M1264.8 775.0L1264.6 767.2M1264.8 775.0L1272.8 776.5M1266.1 773.8L1266.6 764.8M1266.1 773.8L1275.6 772.4M1267.2 772.7L1266.7 766.3M1267.2 772.7L1273.1 773.2" stroke="#6a9c92" opacity="0.63" stroke-width="1.3"/>
<path d="M1327.9 809.6L1305.3 802.3M1327.9 809.6L1322.6 813.9M1327.9 809.6L1324.1 803.9M1326.1 809.1L1320.7 813.1M1326.1 809.1L1322.8 801.3M1324.3 808.5L1315.6 812.0M1324.3 808.5L1321.7 802.7M1321.9 807.7L1315.8 811.4M1321.9 807.7L1317.9 800.1M1320.0 807.1L1313.4 813.0M1320.0 807.1L1316.8 800.7M1318.7 806.7L1311.1 813.7M1318.7 806.7L1316.5 797.0M1316.1 805.8L1309.3 813.1M1316.1 805.8L1309.9 797.5M1314.2 805.2L1305.4 809.1M1314.2 805.2L1310.1 796.4M1312.7 804.7L1306.0 807.5M1312.7 804.7L1309.3 794.7M1310.7 804.1L1305.6 808.1M1310.7 804.1L1310.7 797.7M1308.7 803.4L1304.0 809.7M1308.7 803.4L1304.7 795.2" stroke="#6a9c92" opacity="0.76" stroke-width="1.3"/>
<path d="M1328.8 809.2L1325.8 793.1M1328.9 809.2L1323.6 807.6M1328.9 809.2L1333.3 804.4M1328.6 807.6L1322.3 803.4M1328.6 807.6L1333.4 802.7M1328.0 804.9L1322.5 800.8M1328.0 804.9L1331.9 799.6M1327.8 803.4L1320.5 797.5M1327.8 803.4L1334.1 797.7M1327.4 801.7L1317.4 798.3M1327.4 801.7L1334.3 797.3M1327.0 799.5L1320.6 796.5M1327.0 799.5L1333.7 791.5M1326.6 797.2L1319.3 794.6M1326.6 797.2L1332.4 789.8M1326.3 795.3L1320.9 791.5M1326.3 795.3L1332.8 789.8" stroke="#5a8c82" opacity="0.90" stroke-width="1.3"/>
<path d="M1330.2 809.6L1354.4 802.0M1330.5 809.5L1331.9 803.6M1330.5 809.5L1336.4 814.8M1332.3 809.0L1337.9 802.1M1332.3 809.0L1339.2 810.5M1334.1 808.4L1338.1 802.3M1334.1 808.4L1339.2 811.4M1336.2 807.7L1339.9 802.7M1336.2 807.7L1343.5 811.6M1338.2 807.1L1340.8 798.9M1338.2 807.1L1345.0 813.0M1340.1 806.5L1342.8 799.5M1340.1 806.5L1348.2 813.2M1341.3 806.1L1342.8 797.8M1341.3 806.1L1347.8 810.4M1343.3 805.5L1348.7 796.1M1343.3 805.5L1349.3 814.1M1345.1 804.9L1348.4 794.6M1345.1 804.9L1350.1 809.5M1347.7 804.1L1348.6 798.0M1347.7 804.1L1354.0 809.2M1349.6 803.5L1353.7 797.0M1349.6 803.5L1357.1 808.8M1351.4 802.9L1352.6 796.4M1351.4 802.9L1360.2 805.3" stroke="#78a89e" opacity="0.91" stroke-width="1.3"/>
<path d="M1329.7 810.9L1343.3 829.3M1329.5 810.7L1334.4 810.1M1329.5 810.7L1329.6 817.8M1330.7 812.3L1337.6 812.1M1330.7 812.3L1327.4 820.4M1332.2 814.3L1339.1 815.3M1332.2 814.3L1331.7 822.8M1333.3 815.8L1339.3 816.5M1333.3 815.8L1332.2 825.8M1334.2 817.1L1340.8 819.3M1334.2 817.1L1329.9 824.4M1335.7 819.0L1344.0 816.9M1335.7 819.0L1334.8 826.4M1336.9 820.7L1345.0 822.4M1336.9 820.7L1335.4 831.7M1338.1 822.2L1348.6 821.4M1338.1 822.2L1337.6 829.9M1339.1 823.6L1346.2 824.4M1339.1 823.6L1336.8 831.9M1340.5 825.5L1348.1 826.8M1340.5 825.5L1338.4 834.5M1341.4 826.8L1349.3 824.6M1341.4 826.8L1340.4 836.1" stroke="#4e7c72" opacity="0.78" stroke-width="1.3"/>
<path d="M1328.6 810.9L1320.6 829.4M1328.4 811.3L1332.6 818.5M1328.4 811.3L1323.4 814.3M1327.8 812.7L1332.2 817.7M1327.8 812.7L1321.9 813.8M1326.9 814.8L1329.9 821.9M1326.9 814.8L1317.2 815.5M1326.1 816.7L1331.4 823.9M1326.1 816.7L1317.1 821.2M1325.3 818.5L1330.1 826.4M1325.3 818.5L1314.1 818.2M1324.8 819.8L1329.0 829.9M1324.8 819.8L1316.1 821.2M1323.8 822.1L1327.8 827.4M1323.8 822.1L1316.2 824.6M1323.2 823.5L1329.6 830.4M1323.2 823.5L1315.5 828.8M1322.1 825.9L1323.6 833.1M1322.1 825.9L1316.7 827.7M1321.6 827.1L1326.8 832.9M1321.6 827.1L1313.5 830.8" stroke="#5a8c82" opacity="0.93" stroke-width="1.3"/>
<path d="M1344.5 850.7L1353.7 863.7M1344.5 850.7L1350.4 852.1M1344.5 850.7L1341.3 858.5M1345.7 852.5L1352.5 853.9M1345.7 852.5L1343.9 858.7M1346.8 854.0L1355.5 854.2M1346.8 854.0L1344.3 860.0M1348.1 855.8L1355.0 855.5M1348.1 855.8L1344.4 863.1M1349.2 857.3L1360.4 856.4M1349.2 857.3L1347.4 867.9M1350.4 859.1L1360.5 857.1M1350.4 859.1L1349.6 867.4M1351.6 860.7L1360.8 860.4M1351.6 860.7L1350.4 866.9M1352.5 862.0L1358.2 863.8M1352.5 862.0L1348.6 868.1" stroke="#5a8c82" opacity="0.80" stroke-width="1.3"/>
<path d="M1343.0 850.4L1323.4 858.9M1343.4 850.3L1343.6 855.4M1343.4 850.3L1337.3 845.1M1341.0 851.3L1338.5 858.1M1341.0 851.3L1335.9 847.4M1339.1 852.1L1335.7 857.5M1339.1 852.1L1330.6 848.4M1337.3 852.9L1334.5 860.2M1337.3 852.9L1329.0 849.9M1335.4 853.7L1336.2 864.0M1335.4 853.7L1329.3 850.2M1333.8 854.4L1332.0 864.2M1333.8 854.4L1324.1 851.9M1332.3 855.1L1327.9 863.9M1332.3 855.1L1325.6 847.0M1330.1 856.0L1327.1 864.1M1330.1 856.0L1325.3 850.0M1328.0 856.9L1328.6 865.9M1328.0 856.9L1321.9 852.1M1326.2 857.7L1326.6 867.1M1326.2 857.7L1319.7 851.7" stroke="#446e64" opacity="0.66" stroke-width="1.3"/>
<path d="M1344.5 849.2L1353.7 833.3M1344.6 848.9L1343.3 843.6M1344.6 848.9L1350.2 847.9M1345.4 847.6L1343.3 839.6M1345.4 847.6L1352.2 844.3M1346.3 846.0L1344.5 838.6M1346.3 846.0L1355.1 847.2M1347.5 843.9L1344.5 838.2M1347.5 843.9L1355.6 840.7M1348.6 842.0L1348.7 834.3M1348.6 842.0L1358.3 841.1M1349.6 840.4L1343.8 831.4M1349.6 840.4L1358.1 838.9M1350.5 838.8L1348.0 829.7M1350.5 838.8L1358.5 839.3M1351.5 837.0L1350.7 829.8M1351.5 837.0L1360.3 837.8M1352.5 835.4L1351.4 830.0M1352.5 835.4L1359.8 834.8" stroke="#6a9c92" opacity="0.70" stroke-width="1.3"/>
<path d="M1389.0 860.2L1369.9 864.6M1389.1 860.2L1386.0 864.6M1389.1 860.2L1385.0 854.7M1387.1 860.7L1385.4 866.7M1387.1 860.7L1382.1 857.9M1385.0 861.1L1381.0 867.4M1385.0 861.1L1379.8 855.1M1383.3 861.5L1381.9 870.0M1383.3 861.5L1377.7 857.0M1381.2 862.0L1380.8 873.2M1381.2 862.0L1377.1 856.3M1379.3 862.4L1379.1 873.1M1379.3 862.4L1371.9 855.8M1377.6 862.8L1372.5 869.0M1377.6 862.8L1372.2 857.4M1375.1 863.4L1369.7 868.3M1375.1 863.4L1370.4 856.9M1373.7 863.7L1370.4 872.8M1373.7 863.7L1367.5 856.6" stroke="#78a89e" opacity="0.88" stroke-width="1.3"/>
<path d="M1389.5 859.1L1380.1 841.4M1389.5 859.0L1384.5 858.3M1389.5 859.0L1393.1 853.0M1388.6 857.3L1381.7 857.8M1388.6 857.3L1391.0 852.2M1387.6 855.5L1379.8 852.6M1387.6 855.5L1390.9 847.1M1386.7 853.8L1379.1 851.6M1386.7 853.8L1389.9 848.1M1385.7 852.0L1376.7 849.7M1385.7 852.0L1389.2 846.0M1385.0 850.6L1373.2 850.1M1385.0 850.6L1388.0 839.4M1383.8 848.3L1374.3 844.0M1383.8 848.3L1384.2 838.9M1383.0 846.9L1375.0 842.2M1383.0 846.9L1386.9 839.6M1381.8 844.7L1375.0 845.3M1381.8 844.7L1383.4 836.1M1381.1 843.3L1373.3 839.1M1381.1 843.3L1383.2 837.2" stroke="#446e64" opacity="0.77" stroke-width="1.3"/>
<path d="M1390.8 859.2L1406.7 844.1M1390.8 859.3L1388.5 853.4M1390.8 859.3L1396.0 861.1M1392.3 857.8L1389.7 849.3M1392.3 857.8L1399.2 855.9M1393.4 856.8L1390.2 849.7M1393.4 856.8L1401.6 859.7M1395.0 855.3L1395.1 847.3M1395.0 855.3L1402.5 855.8M1396.8 853.5L1397.7 846.5M1396.8 853.5L1405.6 857.0M1398.0 852.4L1395.5 841.9M1398.0 852.4L1407.7 851.0M1399.3 851.2L1401.5 839.9M1399.3 851.2L1410.8 852.4M1401.2 849.4L1401.8 838.7M1401.2 849.4L1408.0 851.6M1402.5 848.1L1402.8 841.4M1402.5 848.1L1412.1 849.6M1403.7 847.1L1401.9 840.0M1403.7 847.1L1409.7 848.6" stroke="#6a9c92" opacity="0.64" stroke-width="1.3"/>
<path d="M1390.9 860.6L1408.3 872.8M1390.7 860.5L1398.1 859.9M1390.7 860.5L1389.0 868.1M1392.3 861.6L1401.1 860.3M1392.3 861.6L1393.0 868.1M1394.0 862.8L1400.8 860.7M1394.0 862.8L1393.9 869.0M1395.9 864.1L1406.0 863.2M1395.9 864.1L1393.6 872.4M1397.5 865.2L1406.9 862.5M1397.5 865.2L1398.5 872.8M1399.3 866.5L1406.4 862.8M1399.3 866.5L1397.4 874.3M1400.9 867.6L1409.8 863.8M1400.9 867.6L1402.8 878.3M1402.3 868.6L1412.3 866.9M1402.3 868.6L1404.0 874.9M1404.3 870.0L1413.2 869.2M1404.3 870.0L1404.2 877.0M1405.7 871.0L1414.2 870.5M1405.7 871.0L1408.3 879.7" stroke="#446e64" opacity="0.86" stroke-width="1.3"/>
<path d="M1390.3 861.3L1395.6 888.3M1390.2 861.1L1395.1 862.6M1390.2 861.1L1385.3 865.8M1390.7 863.4L1396.0 867.8M1390.7 863.4L1385.0 866.0M1391.1 865.6L1397.8 868.5M1391.1 865.6L1385.1 871.4M1391.5 867.6L1400.1 870.3M1391.5 867.6L1386.0 872.1M1391.8 869.0L1397.9 875.0M1391.8 869.0L1384.9 875.2M1392.2 871.3L1401.7 874.6M1392.2 871.3L1387.0 877.4M1392.6 872.9L1401.1 876.6M1392.6 872.9L1386.5 881.2M1393.0 875.3L1402.3 880.8M1393.0 875.3L1385.2 881.3M1393.3 876.9L1400.0 881.1M1393.3 876.9L1388.3 886.7M1393.7 878.9L1402.9 881.4M1393.7 878.9L1387.7 883.8M1394.1 880.6L1402.7 882.4M1394.1 880.6L1389.1 885.2M1394.5 882.8L1400.5 884.2M1394.5 882.8L1387.5 887.8M1394.9 884.5L1400.2 889.2M1394.9 884.5L1390.7 889.6" stroke="#446e64" opacity="0.92" stroke-width="1.3"/>
<path d="M1226.7 877.3L1221.0 902.6M1226.8 877.0L1231.0 881.9M1226.8 877.0L1219.1 878.9M1226.3 878.9L1231.7 883.6M1226.3 878.9L1219.8 884.4M1225.8 881.2L1228.5 886.9M1225.8 881.2L1218.4 886.2M1225.4 882.9L1230.8 887.0M1225.4 882.9L1219.4 887.5M1225.0 884.8L1229.3 889.8M1225.0 884.8L1216.0 888.0M1224.4 887.3L1229.9 895.3M1224.4 887.3L1216.4 888.1M1224.1 888.7L1231.1 894.0M1224.1 888.7L1217.5 894.1M1223.7 890.8L1227.7 898.6M1223.7 890.8L1214.1 893.6M1223.1 893.1L1231.1 899.1M1223.1 893.1L1213.9 894.8M1222.7 895.2L1229.4 900.7M1222.7 895.2L1215.2 902.3M1222.3 896.7L1229.2 902.2M1222.3 896.7L1215.7 899.0M1221.9 898.4L1227.1 903.9M1221.9 898.4L1212.5 899.8" stroke="#446e64" opacity="0.79" stroke-width="1.3"/>
<path d="M1225.8 876.4L1201.4 885.4M1225.9 876.4L1225.0 884.1M1225.9 876.4L1218.4 873.6M1223.8 877.2L1221.2 882.9M1223.8 877.2L1217.2 872.0M1221.9 877.9L1221.0 884.5M1221.9 877.9L1217.3 874.4M1220.2 878.5L1217.6 885.0M1220.2 878.5L1215.2 872.6M1218.2 879.2L1215.3 886.0M1218.2 879.2L1212.8 873.1M1216.3 879.9L1211.6 889.1M1216.3 879.9L1208.0 873.1M1214.7 880.5L1209.7 889.1M1214.7 880.5L1204.0 876.4M1212.4 881.3L1212.2 889.8M1212.4 881.3L1202.0 877.4M1210.4 882.1L1206.1 890.3M1210.4 882.1L1205.6 877.0M1209.2 882.5L1205.8 888.3M1209.2 882.5L1203.8 879.0M1206.8 883.4L1203.5 890.9M1206.8 883.4L1198.0 880.2M1205.0 884.1L1202.3 891.6M1205.0 884.1L1199.2 877.0" stroke="#446e64" opacity="0.68" stroke-width="1.3"/>
<path d="M1226.9 875.1L1225.2 857.7M1227.0 875.5L1220.5 871.6M1227.0 875.5L1231.0 872.7M1226.7 873.4L1220.1 870.5M1226.7 873.4L1231.6 867.4M1226.5 871.3L1219.7 868.7M1226.5 871.3L1233.7 865.6M1226.3 869.1L1218.9 862.3M1226.3 869.1L1232.9 861.9M1226.2 867.6L1219.8 863.8M1226.2 867.6L1232.5 858.1M1225.9 865.0L1219.0 862.2M1225.9 865.0L1231.6 860.1M1225.8 863.3L1219.8 859.2M1225.8 863.3L1232.1 859.2M1225.6 861.2L1218.3 858.5M1225.6 861.2L1232.6 856.0" stroke="#6a9c92" opacity="0.64" stroke-width="1.3"/>
<path d="M1228.2 875.4L1252.3 862.6M1228.2 875.4L1229.3 869.2M1228.2 875.4L1234.6 877.7M1230.3 874.3L1233.3 866.3M1230.3 874.3L1236.4 875.5M1231.6 873.6L1232.2 866.3M1231.6 873.6L1237.1 877.8M1233.2 872.7L1236.1 865.6M1233.2 872.7L1239.7 874.6M1235.5 871.5L1235.6 864.0M1235.5 871.5L1242.1 875.8M1237.1 870.6L1240.2 860.3M1237.1 870.6L1246.2 875.2M1238.9 869.7L1239.7 859.5M1238.9 869.7L1250.3 870.2M1240.9 868.7L1242.8 857.8M1240.9 868.7L1248.2 874.2M1242.7 867.7L1243.4 859.6M1242.7 867.7L1252.1 869.7M1244.4 866.8L1247.2 859.0M1244.4 866.8L1251.9 868.3M1246.2 865.8L1247.9 859.4M1246.2 865.8L1253.5 867.7M1247.5 865.2L1248.0 859.1M1247.5 865.2L1253.5 870.1M1249.8 864.0L1249.0 857.4M1249.8 864.0L1255.2 865.7" stroke="#4e7c72" opacity="0.86" stroke-width="1.3"/>
<path d="M1228.2 876.4L1252.0 884.7M1228.4 876.5L1232.7 873.1M1228.4 876.5L1231.6 883.1M1230.1 877.1L1236.4 870.8M1230.1 877.1L1233.7 885.2M1231.9 877.7L1238.4 872.1M1231.9 877.7L1234.9 885.9M1233.6 878.3L1239.4 872.3M1233.6 878.3L1236.7 884.3M1235.6 879.0L1243.6 875.6M1235.6 879.0L1239.8 887.2M1237.6 879.7L1245.4 877.5M1237.6 879.7L1239.4 886.3M1239.5 880.4L1248.9 875.2M1239.5 880.4L1241.4 891.1M1241.4 881.0L1250.6 874.8M1241.4 881.0L1244.6 890.7M1243.3 881.7L1252.7 879.8M1243.3 881.7L1243.9 889.4M1245.5 882.4L1251.9 879.8M1245.5 882.4L1249.2 888.2M1247.4 883.1L1253.2 881.7M1247.4 883.1L1248.4 890.7M1248.7 883.6L1256.7 879.0M1248.7 883.6L1252.6 891.3" stroke="#4e7c72" opacity="0.79" stroke-width="1.3"/>
<path d="M1168.9 870.1L1147.0 872.6M1169.1 870.1L1166.3 877.2M1169.1 870.1L1166.9 864.6M1167.3 870.3L1164.3 876.2M1167.3 870.3L1164.1 863.7M1164.8 870.6L1161.5 876.6M1164.8 870.6L1160.1 864.4M1162.8 870.8L1161.6 877.2M1162.8 870.8L1157.3 864.3M1161.0 871.0L1157.0 878.3M1161.0 871.0L1155.2 862.5M1159.0 871.2L1155.0 881.8M1159.0 871.2L1149.8 866.1M1156.7 871.5L1151.7 879.8M1156.7 871.5L1150.6 863.8M1155.2 871.7L1150.6 877.3M1155.2 871.7L1147.0 865.8M1152.9 871.9L1148.9 878.6M1152.9 871.9L1148.9 863.9M1151.1 872.1L1148.6 878.7M1151.1 872.1L1148.3 866.9M1149.4 872.3L1145.1 877.9M1149.4 872.3L1143.5 867.4" stroke="#5a8c82" opacity="0.72" stroke-width="1.3"/>
<path d="M1169.7 869.0L1163.0 849.8M1169.5 868.7L1163.0 866.2M1169.5 868.7L1170.5 863.7M1169.0 867.0L1161.2 864.1M1169.0 867.0L1172.6 860.3M1168.5 865.6L1161.0 860.5M1168.5 865.6L1172.0 861.0M1167.6 863.0L1161.2 859.1M1167.6 863.0L1170.2 854.1M1167.0 861.4L1159.9 860.0M1167.0 861.4L1172.1 855.3M1166.4 859.6L1157.0 857.0M1166.4 859.6L1171.0 851.9M1165.7 857.7L1156.3 853.7M1165.7 857.7L1172.1 850.2M1165.0 855.5L1157.3 852.4M1165.0 855.5L1167.3 848.7M1164.4 853.8L1158.5 848.8M1164.4 853.8L1167.8 846.3M1163.8 852.1L1154.7 851.5M1163.8 852.1L1166.9 844.9" stroke="#6a9c92" opacity="0.87" stroke-width="1.3"/>
<path d="M1171.0 869.1L1190.1 850.4M1170.8 869.2L1167.0 862.3M1170.8 869.2L1178.3 871.2M1172.5 867.6L1171.9 860.4M1172.5 867.6L1178.7 870.7M1173.8 866.3L1174.8 857.4M1173.8 866.3L1180.9 868.0M1175.5 864.6L1172.9 856.3M1175.5 864.6L1183.8 866.6M1176.6 863.6L1173.3 853.8M1176.6 863.6L1184.9 865.7M1178.2 862.0L1177.3 853.5M1178.2 862.0L1185.6 862.0M1179.4 860.9L1175.1 851.4M1179.4 860.9L1189.2 858.7M1181.0 859.3L1177.1 850.8M1181.0 859.3L1191.3 860.4M1182.2 858.1L1182.5 851.2M1182.2 858.1L1189.6 859.2M1183.7 856.6L1182.8 846.4M1183.7 856.6L1192.8 858.6M1185.5 854.9L1186.5 848.9M1185.5 854.9L1193.3 854.1M1186.6 853.9L1184.9 848.1M1186.6 853.9L1195.1 855.2M1188.3 852.2L1188.4 844.1M1188.3 852.2L1195.2 855.3" stroke="#446e64" opacity="0.83" stroke-width="1.3"/>
<path d="M1170.9 870.6L1188.8 881.9M1171.1 870.7L1176.2 866.3M1171.1 870.7L1173.8 877.0M1172.4 871.5L1177.5 868.6M1172.4 871.5L1172.9 880.4M1174.2 872.6L1180.1 868.4M1174.2 872.6L1175.1 879.8M1176.2 873.9L1183.3 871.1M1176.2 873.9L1178.4 880.0M1177.7 874.9L1187.5 870.6M1177.7 874.9L1177.5 884.8M1179.3 875.8L1187.3 870.0M1179.3 875.8L1183.2 885.8M1180.9 876.9L1189.2 875.8M1180.9 876.9L1180.8 885.9M1182.6 877.9L1188.2 874.7M1182.6 877.9L1186.7 886.6M1184.7 879.3L1192.6 878.9M1184.7 879.3L1185.2 885.3M1185.8 880.0L1193.8 876.4M1185.8 880.0L1187.4 887.0" stroke="#4e7c72" opacity="0.91" stroke-width="1.3"/>
<path d="M1169.9 870.9L1167.2 889.7M1169.8 871.3L1172.9 875.2M1169.8 871.3L1164.2 872.5M1169.6 873.1L1173.4 876.9M1169.6 873.1L1164.0 878.1M1169.3 874.8L1173.2 880.6M1169.3 874.8L1163.8 879.6M1169.0 877.0L1174.8 882.2M1169.0 877.0L1163.6 881.9M1168.8 878.8L1177.8 885.4M1168.8 878.8L1159.9 885.2M1168.4 881.1L1176.0 884.9M1168.4 881.1L1160.1 888.5M1168.1 883.1L1172.1 889.2M1168.1 883.1L1158.7 887.3M1167.9 885.1L1173.6 891.3M1167.9 885.1L1159.2 889.3M1167.7 886.5L1173.6 891.4M1167.7 886.5L1160.0 889.3" stroke="#6a9c92" opacity="0.63" stroke-width="1.3"/>
<path d="M1111.7 844.8L1085.2 839.9M1111.3 844.7L1107.6 848.4M1111.3 844.7L1106.8 839.8M1109.4 844.3L1104.7 847.9M1109.4 844.3L1107.8 839.2M1107.5 844.0L1101.8 849.3M1107.5 844.0L1105.2 838.6M1106.1 843.7L1099.3 847.7M1106.1 843.7L1103.2 836.4M1103.5 843.3L1097.9 847.9M1103.5 843.3L1099.2 833.9M1101.7 842.9L1095.4 847.8M1101.7 842.9L1098.0 832.7M1100.1 842.6L1092.5 846.8M1100.1 842.6L1099.5 835.0M1098.3 842.3L1088.4 847.8M1098.3 842.3L1093.2 834.4M1096.0 841.9L1087.7 845.9M1096.0 841.9L1091.0 836.4M1094.0 841.5L1087.8 849.3M1094.0 841.5L1088.1 835.4M1092.1 841.2L1087.9 845.6M1092.1 841.2L1090.6 834.4M1090.1 840.8L1085.3 846.8M1090.1 840.8L1085.4 833.1M1088.4 840.5L1080.1 843.8M1088.4 840.5L1085.5 833.0" stroke="#446e64" opacity="0.82" stroke-width="1.3"/>
<path d="M1112.9 843.7L1111.9 818.3M1113.0 843.9L1107.7 840.4M1113.0 843.9L1116.4 840.2M1112.9 841.6L1107.2 837.5M1112.9 841.6L1116.5 836.4M1112.8 839.4L1107.6 833.0M1112.8 839.4L1116.8 835.2M1112.7 837.9L1105.1 835.0M1112.7 837.9L1121.3 835.0M1112.6 835.5L1106.9 830.7M1112.6 835.5L1115.6 829.7M1112.5 834.0L1105.8 828.4M1112.5 834.0L1120.0 829.4M1112.4 831.5L1103.7 823.7M1112.4 831.5L1121.9 825.8M1112.4 829.4L1104.4 822.9M1112.4 829.4L1121.1 822.0M1112.3 827.8L1103.1 824.5M1112.3 827.8L1118.0 821.5M1112.2 826.0L1104.7 819.3M1112.2 826.0L1120.9 822.0M1112.1 823.8L1107.7 817.6M1112.1 823.8L1120.6 820.4M1112.0 821.7L1106.5 815.9M1112.0 821.7L1116.8 814.5" stroke="#5a8c82" opacity="0.79" stroke-width="1.3"/>
<path d="M1113.6 844.5L1125.6 833.7M1113.3 844.7L1112.3 836.9M1113.3 844.7L1120.1 845.9M1114.9 843.3L1112.9 836.8M1114.9 843.3L1120.7 843.8M1116.5 841.9L1116.5 833.2M1116.5 841.9L1123.7 844.0M1117.9 840.6L1116.1 833.7M1117.9 840.6L1128.6 839.2M1119.7 838.9L1117.5 828.3M1119.7 838.9L1131.1 838.9M1121.3 837.5L1123.2 829.2M1121.3 837.5L1128.7 838.7M1122.7 836.2L1124.4 829.5M1122.7 836.2L1129.9 835.5M1124.1 835.0L1121.5 828.2M1124.1 835.0L1131.8 838.6" stroke="#6a9c92" opacity="0.81" stroke-width="1.3"/>
<path d="M1113.9 846.0L1130.9 865.2M1113.9 846.0L1121.1 846.2M1113.9 846.0L1114.7 851.0M1115.4 847.7L1124.0 848.0M1115.4 847.7L1112.0 855.5M1116.3 848.7L1122.7 846.1M1116.3 848.7L1115.0 854.6M1118.1 850.7L1125.5 847.9M1118.1 850.7L1117.9 859.7M1119.2 852.0L1126.4 849.2M1119.2 852.0L1118.5 862.1M1120.7 853.7L1128.4 855.3M1120.7 853.7L1120.0 863.7M1121.8 854.9L1129.1 853.3M1121.8 854.9L1118.2 865.9M1123.1 856.4L1133.5 857.2M1123.1 856.4L1120.2 863.3M1124.6 858.1L1133.4 858.3M1124.6 858.1L1125.1 867.0M1126.0 859.7L1132.3 861.2M1126.0 859.7L1127.0 868.5M1127.0 860.8L1135.0 862.4M1127.0 860.8L1126.1 870.5M1128.2 862.2L1135.8 860.6M1128.2 862.2L1124.2 870.3" stroke="#5a8c82" opacity="0.85" stroke-width="1.3"/>
<path d="M1112.7 846.2L1107.2 870.0M1112.7 846.4L1116.7 849.8M1112.7 846.4L1107.8 850.5M1112.2 848.3L1116.2 855.3M1112.2 848.3L1105.2 850.5M1111.8 850.1L1114.7 855.2M1111.8 850.1L1102.9 852.5M1111.3 852.3L1116.0 857.8M1111.3 852.3L1104.5 854.6M1110.9 853.8L1114.4 861.2M1110.9 853.8L1104.7 854.7M1110.5 855.8L1115.2 861.9M1110.5 855.8L1102.3 860.2M1110.0 857.8L1114.2 865.4M1110.0 857.8L1102.6 865.9M1109.5 860.0L1116.5 866.6M1109.5 860.0L1101.3 866.7M1109.1 861.9L1114.9 869.9M1109.1 861.9L1101.5 867.2M1108.6 863.8L1116.0 867.8M1108.6 863.8L1100.2 866.7M1108.1 865.8L1114.5 871.3M1108.1 865.8L1102.8 867.8M1107.7 867.8L1110.8 872.5M1107.7 867.8L1100.6 868.4" stroke="#4e7c72" opacity="0.78" stroke-width="1.3"/>
<path d="M1049.4 833.8L1037.2 809.3M1049.4 833.8L1043.8 834.9M1049.4 833.8L1051.0 826.0M1048.3 831.7L1041.5 831.4M1048.3 831.7L1050.0 826.3M1047.4 829.9L1040.1 829.5M1047.4 829.9L1049.6 822.0M1046.8 828.5L1038.4 826.4M1046.8 828.5L1052.3 820.9M1046.0 826.9L1039.8 828.0M1046.0 826.9L1051.1 821.5M1045.0 825.1L1036.0 819.8M1045.0 825.1L1047.0 816.6M1044.2 823.4L1037.3 823.4M1044.2 823.4L1046.4 816.4M1043.0 820.9L1033.4 822.3M1043.0 820.9L1044.6 809.4M1042.2 819.4L1035.7 816.4M1042.2 819.4L1046.9 813.2M1041.2 817.4L1032.2 816.5M1041.2 817.4L1047.1 810.0M1040.4 815.8L1031.1 813.8M1040.4 815.8L1042.5 807.5M1039.6 814.2L1031.1 810.7M1039.6 814.2L1044.6 805.8M1038.9 812.6L1032.6 812.2M1038.9 812.6L1042.3 805.0" stroke="#4e7c72" opacity="0.61" stroke-width="1.3"/>
<path d="M1050.7 834.2L1064.8 818.7M1050.5 834.5L1048.1 826.9M1050.5 834.5L1056.4 834.9M1051.8 833.0L1052.3 824.7M1051.8 833.0L1058.9 835.1M1053.4 831.2L1054.2 824.8M1053.4 831.2L1062.1 833.3M1054.7 829.8L1056.4 821.4M1054.7 829.8L1064.6 829.6M1056.2 828.2L1057.5 821.6M1056.2 828.2L1065.5 832.4M1057.7 826.6L1055.1 817.8M1057.7 826.6L1068.0 826.7M1058.8 825.3L1058.3 818.5M1058.8 825.3L1066.8 827.2M1060.2 823.7L1058.9 817.2M1060.2 823.7L1067.8 825.1M1061.4 822.4L1060.8 813.9M1061.4 822.4L1068.4 821.4M1062.6 821.1L1063.3 814.1M1062.6 821.1L1071.0 819.9" stroke="#78a89e" opacity="0.76" stroke-width="1.3"/>
<path d="M1051.1 835.5L1073.2 845.9M1051.0 835.5L1055.1 831.4M1051.0 835.5L1051.1 841.5M1053.0 836.4L1059.4 835.8M1053.0 836.4L1054.1 844.7M1054.5 837.1L1060.7 835.4M1054.5 837.1L1054.3 844.2M1056.7 838.1L1063.2 834.7M1056.7 838.1L1057.2 847.2M1058.3 838.9L1066.3 835.1M1058.3 838.9L1060.3 845.2M1060.1 839.7L1066.2 836.4M1060.1 839.7L1061.6 846.8M1062.2 840.7L1070.8 838.6M1062.2 840.7L1061.5 848.3M1063.8 841.4L1074.5 840.2M1063.8 841.4L1066.0 850.8M1065.5 842.3L1076.1 841.2M1065.5 842.3L1067.8 848.9M1067.7 843.3L1073.8 839.1M1067.7 843.3L1072.3 851.4M1069.0 843.9L1075.7 839.0M1069.0 843.9L1071.3 850.1M1071.0 844.8L1075.4 841.7M1071.0 844.8L1073.0 853.1" stroke="#4e7c72" opacity="0.88" stroke-width="1.3"/>
<path d="M1049.8 836.2L1045.6 859.5M1049.7 836.4L1055.2 842.8M1049.7 836.4L1043.2 840.0M1049.5 837.8L1053.9 843.3M1049.5 837.8L1043.4 842.9M1049.1 840.1L1055.0 844.1M1049.1 840.1L1044.0 844.9M1048.7 842.2L1055.8 846.4M1048.7 842.2L1041.8 846.1M1048.3 844.4L1054.0 851.3M1048.3 844.4L1037.7 846.8M1048.0 845.9L1055.9 853.6M1048.0 845.9L1040.2 847.4M1047.7 848.0L1056.1 854.3M1047.7 848.0L1039.9 851.5M1047.3 850.1L1050.3 859.7M1047.3 850.1L1040.0 853.8M1046.9 852.2L1050.0 857.6M1046.9 852.2L1041.9 855.9M1046.7 853.5L1051.6 857.8M1046.7 853.5L1039.4 856.5M1046.2 856.0L1051.9 860.9M1046.2 856.0L1040.8 861.5" stroke="#4e7c72" opacity="0.86" stroke-width="1.3"/>
<path d="M1049.1 835.4L1031.3 843.4M1048.8 835.5L1044.4 842.7M1048.8 835.5L1042.0 830.6M1047.0 836.4L1045.2 841.7M1047.0 836.4L1040.9 832.2M1045.8 836.9L1044.0 846.1M1045.8 836.9L1037.5 834.8M1043.6 837.9L1039.8 844.8M1043.6 837.9L1037.5 833.0M1042.0 838.6L1038.0 843.8M1042.0 838.6L1033.0 832.4M1039.9 839.6L1038.9 849.6M1039.9 839.6L1031.8 836.6M1038.5 840.2L1036.6 850.9M1038.5 840.2L1033.0 835.4M1036.3 841.2L1035.0 848.2M1036.3 841.2L1029.2 839.3M1034.9 841.8L1032.5 847.9M1034.9 841.8L1028.7 836.8" stroke="#446e64" opacity="0.86" stroke-width="1.3"/>
<path d="M1078.1 796.0L1080.3 815.8M1078.1 795.8L1083.4 799.4M1078.1 795.8L1074.6 800.5M1078.3 797.8L1085.1 801.4M1078.3 797.8L1074.1 801.4M1078.6 800.3L1087.8 803.8M1078.6 800.3L1072.2 804.0M1078.8 802.2L1086.1 809.7M1078.8 802.2L1072.7 806.4M1079.0 803.8L1089.5 807.4M1079.0 803.8L1072.4 809.3M1079.2 805.7L1086.7 811.9M1079.2 805.7L1071.1 809.0M1079.4 807.8L1087.9 812.9M1079.4 807.8L1074.4 813.8M1079.6 809.7L1090.1 811.1M1079.6 809.7L1072.2 815.2M1079.9 812.1L1087.9 817.4M1079.9 812.1L1072.5 817.7" stroke="#5a8c82" opacity="0.85" stroke-width="1.3"/>
<path d="M1077.2 795.0L1060.5 795.0M1077.2 795.0L1073.0 797.7M1077.2 795.0L1075.0 789.2M1075.3 795.0L1073.0 800.9M1075.3 795.0L1071.4 788.2M1073.1 795.0L1069.8 801.4M1073.1 795.0L1069.4 789.6M1071.0 795.0L1066.7 800.6M1071.0 795.0L1063.2 788.5M1069.1 795.0L1063.3 804.7M1069.1 795.0L1064.9 789.2M1067.1 795.0L1059.2 802.5M1067.1 795.0L1060.1 786.8M1065.5 795.0L1062.6 800.8M1065.5 795.0L1059.5 788.1M1062.8 795.0L1056.2 799.6M1062.8 795.0L1057.2 791.5" stroke="#4e7c72" opacity="0.84" stroke-width="1.3"/>
<path d="M1078.0 793.9L1077.8 772.6M1078.0 794.1L1070.7 791.2M1078.0 794.1L1084.0 790.4M1078.0 792.2L1072.1 785.6M1078.0 792.2L1081.1 787.7M1078.0 790.2L1071.8 788.8M1078.0 790.2L1085.6 786.1M1077.9 788.3L1069.9 784.4M1077.9 788.3L1083.7 780.4M1077.9 785.7L1069.4 782.2M1077.9 785.7L1085.7 780.2M1077.9 784.0L1072.1 777.9M1077.9 784.0L1084.3 778.0M1077.9 782.0L1068.4 778.1M1077.9 782.0L1084.8 777.5M1077.9 779.6L1073.1 774.0M1077.9 779.6L1084.5 773.5M1077.9 778.3L1070.2 774.3M1077.9 778.3L1084.3 771.3M1077.9 775.6L1073.0 772.3M1077.9 775.6L1083.8 769.2" stroke="#6a9c92" opacity="0.65" stroke-width="1.3"/>
<path d="M1079.2 795.2L1104.2 800.0M1079.5 795.3L1083.9 792.4M1079.5 795.3L1081.8 802.2M1081.3 795.6L1087.6 792.0M1081.3 795.6L1083.8 801.6M1083.2 796.0L1090.2 791.0M1083.2 796.0L1085.6 803.0M1084.9 796.3L1090.5 790.8M1084.9 796.3L1088.1 801.9M1087.5 796.8L1093.2 788.5M1087.5 796.8L1092.6 804.8M1089.1 797.1L1094.4 788.0M1089.1 797.1L1093.8 805.3M1090.7 797.4L1096.1 790.4M1090.7 797.4L1095.4 807.8M1092.8 797.8L1102.6 791.8M1092.8 797.8L1097.0 808.2M1095.1 798.3L1102.1 795.1M1095.1 798.3L1099.3 808.0M1096.6 798.6L1102.2 795.1M1096.6 798.6L1098.5 806.6M1099.3 799.1L1104.3 796.1M1099.3 799.1L1103.0 805.2M1101.0 799.4L1105.5 791.9M1101.0 799.4L1102.8 805.9" stroke="#78a89e" opacity="0.63" stroke-width="1.3"/>
<path d="M1289.8 889.0L1285.4 869.0M1289.8 888.9L1283.8 887.0M1289.8 888.9L1293.4 885.4M1289.3 886.8L1282.3 881.6M1289.3 886.8L1291.2 880.1M1288.9 885.1L1280.0 881.9M1288.9 885.1L1292.8 878.3M1288.5 883.2L1280.7 877.8M1288.5 883.2L1292.1 874.6M1288.0 881.0L1282.5 876.5M1288.0 881.0L1296.4 875.1M1287.7 879.5L1277.9 877.7M1287.7 879.5L1293.5 874.5M1287.3 877.7L1282.1 873.1M1287.3 877.7L1292.1 870.9M1286.8 875.7L1278.4 873.7M1286.8 875.7L1295.1 870.0M1286.3 873.3L1277.1 872.1M1286.3 873.3L1291.1 866.4M1285.9 871.4L1280.5 870.0M1285.9 871.4L1289.8 866.5" stroke="#4e7c72" opacity="0.65" stroke-width="1.3"/>
<path d="M1290.8 888.9L1306.7 867.9M1290.6 889.1L1290.0 884.1M1290.6 889.1L1295.8 889.6M1292.2 887.1L1288.9 879.0M1292.2 887.1L1300.4 888.6M1293.1 885.9L1292.0 880.0M1293.1 885.9L1299.3 884.7M1294.5 884.1L1294.0 877.8M1294.5 884.1L1302.2 882.3M1295.5 882.7L1292.7 876.6M1295.5 882.7L1304.7 882.9M1296.7 881.2L1294.6 872.3M1296.7 881.2L1307.0 880.1M1298.2 879.1L1296.9 869.4M1298.2 879.1L1307.8 876.8M1299.3 877.6L1298.8 870.1M1299.3 877.6L1308.7 879.7M1300.5 876.0L1298.1 868.9M1300.5 876.0L1310.9 876.7M1301.5 874.7L1298.7 866.6M1301.5 874.7L1308.6 875.0M1303.0 872.8L1301.4 864.6M1303.0 872.8L1311.2 875.1M1304.2 871.1L1303.7 862.5M1304.2 871.1L1313.5 869.6M1305.2 869.9L1303.3 863.0M1305.2 869.9L1313.8 869.3" stroke="#446e64" opacity="0.91" stroke-width="1.3"/>
<path d="M1290.9 890.6L1309.3 902.1M1290.8 890.5L1298.2 887.0M1290.8 890.5L1290.8 895.4M1292.4 891.5L1299.5 886.6M1292.4 891.5L1292.9 896.9M1294.6 892.9L1302.8 892.1M1294.6 892.9L1293.5 901.7M1295.9 893.7L1302.8 888.4M1295.9 893.7L1295.6 903.5M1297.4 894.6L1305.3 889.6M1297.4 894.6L1298.4 905.0M1299.5 896.0L1307.0 890.0M1299.5 896.0L1301.7 902.6M1301.3 897.1L1309.0 895.6M1301.3 897.1L1301.4 908.6M1302.7 898.0L1310.0 897.0M1302.7 898.0L1304.4 908.5M1304.2 898.9L1310.1 895.0M1304.2 898.9L1308.2 907.2M1306.4 900.3L1312.0 900.4M1306.4 900.3L1305.8 906.1" stroke="#6a9c92" opacity="0.74" stroke-width="1.3"/>
<path d="M1289.7 891.3L1282.8 916.4M1289.6 891.4L1292.7 897.0M1289.6 891.4L1284.1 893.4M1289.1 893.2L1292.7 899.6M1289.1 893.2L1284.2 896.4M1288.7 894.8L1293.3 899.5M1288.7 894.8L1282.9 898.6M1288.0 897.3L1292.4 901.7M1288.0 897.3L1281.5 900.9M1287.6 898.6L1296.0 904.7M1287.6 898.6L1282.5 903.6M1286.9 901.2L1294.4 908.6M1286.9 901.2L1278.4 907.1M1286.5 902.7L1293.0 911.3M1286.5 902.7L1275.8 905.3M1286.0 904.6L1288.9 911.9M1286.0 904.6L1276.7 905.8M1285.5 906.6L1289.6 911.7M1285.5 906.6L1278.7 913.8M1285.0 908.4L1290.8 914.3M1285.0 908.4L1277.8 911.3M1284.3 910.9L1287.0 919.9M1284.3 910.9L1275.9 913.7M1283.9 912.1L1288.5 917.8M1283.9 912.1L1277.6 915.6M1283.4 914.3L1285.4 919.4M1283.4 914.3L1276.8 915.6" stroke="#446e64" opacity="0.62" stroke-width="1.3"/>
<path d="M1289.2 890.1L1272.5 892.9M1289.2 890.1L1285.2 894.7M1289.2 890.1L1283.5 888.2M1287.0 890.5L1284.4 897.6M1287.0 890.5L1283.6 885.1M1285.1 890.8L1280.5 896.4M1285.1 890.8L1277.0 888.0M1283.2 891.1L1277.5 899.1M1283.2 891.1L1276.6 884.4M1281.1 891.5L1275.8 899.0M1281.1 891.5L1275.0 885.8M1279.5 891.8L1275.7 897.5M1279.5 891.8L1272.4 886.4M1277.7 892.1L1274.2 900.1M1277.7 892.1L1270.6 889.6M1275.7 892.4L1269.7 899.8M1275.7 892.4L1268.7 889.7" stroke="#78a89e" opacity="0.91" stroke-width="1.3"/>
<path d="M1399.1 799.7L1380.1 794.0M1399.1 799.7L1394.8 803.4M1399.1 799.7L1396.7 794.7M1397.5 799.2L1391.3 801.7M1397.5 799.2L1394.6 794.5M1395.4 798.6L1388.8 804.8M1395.4 798.6L1391.5 789.8M1393.6 798.1L1387.0 800.7M1393.6 798.1L1391.8 791.9M1391.4 797.4L1383.9 805.2M1391.4 797.4L1390.1 790.4M1389.3 796.8L1381.6 804.4M1389.3 796.8L1387.0 788.8M1387.8 796.3L1378.8 802.3M1387.8 796.3L1386.0 788.2M1385.9 795.7L1379.7 800.1M1385.9 795.7L1383.8 789.1M1383.4 795.0L1379.0 798.8M1383.4 795.0L1382.4 789.0" stroke="#4e7c72" opacity="0.94" stroke-width="1.3"/>
<path d="M1400.0 799.1L1399.8 781.8M1400.0 799.3L1393.8 795.8M1400.0 799.3L1404.5 795.0M1400.0 797.0L1394.3 794.7M1400.0 797.0L1405.4 791.5M1399.9 794.9L1391.4 790.0M1399.9 794.9L1407.2 789.1M1399.9 792.8L1394.8 784.6M1399.9 792.8L1407.8 787.8M1399.9 791.5L1394.0 783.4M1399.9 791.5L1410.1 787.5M1399.9 789.2L1392.8 782.8M1399.9 789.2L1406.7 781.8M1399.9 787.5L1394.5 781.0M1399.9 787.5L1404.6 781.7M1399.8 785.3L1393.9 782.3M1399.8 785.3L1405.4 782.0" stroke="#446e64" opacity="0.61" stroke-width="1.3"/>
<path d="M1400.7 799.7L1415.6 793.7M1401.1 799.6L1402.9 792.7M1401.1 799.6L1406.5 803.5M1402.9 798.8L1404.8 790.1M1402.9 798.8L1410.4 802.7M1404.6 798.1L1404.6 791.0M1404.6 798.1L1412.9 803.2M1406.4 797.4L1410.3 790.6M1406.4 797.4L1412.3 802.7M1408.2 796.7L1410.9 787.1M1408.2 796.7L1416.2 800.0M1410.2 795.9L1412.5 787.9M1410.2 795.9L1419.1 797.3M1412.0 795.1L1415.9 787.8M1412.0 795.1L1417.7 800.5M1414.1 794.3L1416.7 789.4M1414.1 794.3L1420.2 797.5" stroke="#446e64" opacity="0.66" stroke-width="1.3"/>
<path d="M1401.2 800.5L1425.8 809.7M1401.3 800.5L1408.4 796.8M1401.3 800.5L1403.0 805.6M1402.7 801.0L1408.7 798.7M1402.7 801.0L1402.9 806.4M1405.1 801.9L1410.5 799.5M1405.1 801.9L1405.8 810.4M1407.0 802.6L1413.4 796.5M1407.0 802.6L1408.6 809.4M1408.8 803.3L1413.5 799.1M1408.8 803.3L1409.1 811.4M1410.4 803.9L1419.2 799.8M1410.4 803.9L1413.3 813.1M1412.1 804.6L1417.6 800.0M1412.1 804.6L1418.2 813.6M1414.2 805.3L1421.0 799.5M1414.2 805.3L1416.0 813.3M1416.0 806.0L1423.4 804.1M1416.0 806.0L1414.7 816.5M1417.7 806.7L1423.3 803.2M1417.7 806.7L1420.1 813.9M1420.0 807.5L1429.1 805.3M1420.0 807.5L1420.6 817.4M1421.6 808.1L1427.7 804.2M1421.6 808.1L1425.3 816.3M1423.8 809.0L1431.5 807.8M1423.8 809.0L1426.2 816.9" stroke="#446e64" opacity="0.91" stroke-width="1.3"/>
<path d="M1399.4 801.1L1388.1 822.7M1399.5 800.9L1400.6 806.9M1399.5 800.9L1392.6 805.0M1398.6 802.6L1400.0 810.1M1398.6 802.6L1392.2 805.4M1397.6 804.6L1401.2 810.0M1397.6 804.6L1389.6 805.8M1396.8 806.1L1398.0 814.5M1396.8 806.1L1389.0 806.7M1395.8 808.0L1399.5 815.5M1395.8 808.0L1388.2 809.1M1394.8 809.9L1398.3 818.9M1394.8 809.9L1385.0 815.0M1393.8 811.9L1399.8 817.8M1393.8 811.9L1386.6 812.4M1392.8 813.7L1395.6 822.3M1392.8 813.7L1383.9 818.8M1392.0 815.2L1395.6 823.1M1392.0 815.2L1383.2 820.3M1391.0 817.1L1395.3 825.6M1391.0 817.1L1383.4 821.5M1390.2 818.7L1392.5 825.1M1390.2 818.7L1380.7 816.8M1389.3 820.5L1390.4 827.2M1389.3 820.5L1380.7 821.5" stroke="#5a8c82" opacity="0.90" stroke-width="1.3"/>
<path d="M1149.4 741.1L1137.1 762.7M1149.4 741.1L1151.4 745.6M1149.4 741.1L1142.1 741.4M1148.3 743.1L1150.1 750.8M1148.3 743.1L1142.6 744.3M1147.2 744.9L1151.7 751.0M1147.2 744.9L1141.6 745.8M1146.5 746.3L1149.3 753.1M1146.5 746.3L1138.4 747.1M1145.5 748.0L1145.6 755.5M1145.5 748.0L1135.5 749.2M1144.5 749.7L1145.5 756.7M1144.5 749.7L1134.0 750.7M1143.5 751.5L1148.8 757.6M1143.5 751.5L1132.2 750.3M1142.5 753.2L1147.1 760.3M1142.5 753.2L1135.2 754.5M1141.5 755.0L1148.4 762.8M1141.5 755.0L1134.4 754.6M1140.6 756.6L1144.8 765.4M1140.6 756.6L1131.6 761.0M1139.6 758.4L1142.8 764.7M1139.6 758.4L1133.7 760.1M1138.6 760.1L1143.0 767.8M1138.6 760.1L1130.3 761.0" stroke="#6a9c92" opacity="0.62" stroke-width="1.3"/>
<path d="M1149.3 739.5L1136.0 730.1M1149.6 739.7L1143.2 741.3M1149.6 739.7L1150.0 734.6M1147.5 738.2L1140.7 741.3M1147.5 738.2L1146.5 731.4M1145.8 737.0L1137.3 739.4M1145.8 737.0L1147.1 727.9M1144.4 736.1L1137.7 738.1M1144.4 736.1L1142.1 729.3M1142.8 734.9L1134.0 736.2M1142.8 734.9L1140.0 723.5M1141.2 733.8L1133.4 736.2M1141.2 733.8L1144.2 723.8M1139.4 732.5L1132.0 732.7M1139.4 732.5L1138.7 723.6M1137.7 731.3L1129.0 731.8M1137.7 731.3L1137.2 725.8" stroke="#446e64" opacity="0.61" stroke-width="1.3"/>
<path d="M1150.6 739.1L1163.0 721.8M1150.5 739.3L1149.1 734.6M1150.5 739.3L1156.5 740.8M1151.8 737.5L1149.9 731.8M1151.8 737.5L1158.5 737.1M1153.1 735.7L1151.9 729.2M1153.1 735.7L1162.5 735.5M1154.1 734.3L1153.3 725.6M1154.1 734.3L1163.7 737.5M1155.1 732.8L1152.3 723.0M1155.1 732.8L1164.0 729.1M1156.5 730.9L1153.3 724.4M1156.5 730.9L1164.4 731.3M1157.6 729.4L1154.3 719.6M1157.6 729.4L1168.4 731.6M1158.6 727.9L1155.4 718.8M1158.6 727.9L1166.7 724.0M1160.1 725.8L1159.4 719.9M1160.1 725.8L1167.9 727.6M1160.9 724.7L1158.3 716.4M1160.9 724.7L1169.2 721.7" stroke="#446e64" opacity="0.91" stroke-width="1.3"/>
<path d="M1151.2 740.7L1175.3 754.2M1150.9 740.5L1156.1 737.2M1150.9 740.5L1151.5 748.4M1152.9 741.6L1160.6 739.7M1152.9 741.6L1155.9 748.4M1154.5 742.6L1159.6 740.5M1154.5 742.6L1157.3 748.9M1156.5 743.7L1163.2 742.8M1156.5 743.7L1158.4 751.7M1158.5 744.8L1165.6 739.6M1158.5 744.8L1157.4 751.4M1159.7 745.4L1167.6 741.1M1159.7 745.4L1163.0 751.4M1161.7 746.6L1170.7 740.7M1161.7 746.6L1162.9 755.7M1163.1 747.4L1174.7 745.4M1163.1 747.4L1163.5 757.4M1164.9 748.4L1174.9 743.9M1164.9 748.4L1169.4 758.7M1166.8 749.4L1175.1 747.8M1166.8 749.4L1168.8 756.2M1168.3 750.3L1177.6 746.6M1168.3 750.3L1169.1 758.1M1170.4 751.5L1176.1 747.7M1170.4 751.5L1168.9 760.0M1172.4 752.6L1177.9 751.2M1172.4 752.6L1175.4 760.3" stroke="#5a8c82" opacity="0.63" stroke-width="1.3"/>
<path d="M1228.9 745.4L1206.4 752.6M1228.8 745.4L1226.7 750.0M1228.8 745.4L1225.1 741.9M1227.1 745.9L1222.4 753.3M1227.1 745.9L1219.6 743.5M1225.0 746.6L1219.1 753.6M1225.0 746.6L1220.1 741.0M1223.3 747.2L1220.4 752.4M1223.3 747.2L1215.2 741.8M1221.0 747.9L1220.2 757.1M1221.0 747.9L1213.8 742.7M1219.6 748.3L1216.5 754.6M1219.6 748.3L1210.7 746.2M1217.8 748.9L1214.6 756.7M1217.8 748.9L1209.5 742.8M1215.2 749.8L1211.9 756.3M1215.2 749.8L1208.5 743.6M1213.3 750.4L1209.7 758.0M1213.3 750.4L1208.6 744.1M1211.7 750.9L1208.5 757.7M1211.7 750.9L1207.4 746.1M1209.7 751.5L1209.6 757.6M1209.7 751.5L1202.3 747.7" stroke="#446e64" opacity="0.92" stroke-width="1.3"/>
<path d="M1230.4 744.0L1238.4 724.4M1230.5 743.7L1228.2 738.6M1230.5 743.7L1238.3 742.7M1231.3 741.9L1227.7 737.2M1231.3 741.9L1237.1 740.7M1231.9 740.3L1227.5 733.5M1231.9 740.3L1240.3 735.8M1232.7 738.3L1230.3 730.3M1232.7 738.3L1239.2 737.5M1233.5 736.3L1231.1 728.5M1233.5 736.3L1242.4 732.9M1234.3 734.5L1228.0 726.1M1234.3 734.5L1244.8 732.5M1235.1 732.7L1231.1 723.9M1235.1 732.7L1243.9 730.2M1235.9 730.7L1231.3 725.6M1235.9 730.7L1242.8 729.7M1236.4 729.3L1234.9 720.7M1236.4 729.3L1245.9 730.6M1237.2 727.5L1233.6 722.6M1237.2 727.5L1242.5 723.6" stroke="#5a8c82" opacity="0.74" stroke-width="1.3"/>
<path d="M1230.5 746.2L1240.1 770.5M1230.4 746.1L1238.3 746.9M1230.4 746.1L1227.7 752.4M1231.2 748.1L1237.2 749.4M1231.2 748.1L1230.4 754.6M1231.9 749.7L1238.3 751.4M1231.9 749.7L1225.7 755.8M1232.6 751.5L1238.5 752.7M1232.6 751.5L1228.3 759.0M1233.3 753.4L1241.3 754.9M1233.3 753.4L1227.0 760.4M1234.3 755.8L1245.0 757.2M1234.3 755.8L1231.8 762.6M1234.8 757.1L1244.9 761.8M1234.8 757.1L1228.8 764.5M1235.5 759.0L1245.0 762.1M1235.5 759.0L1232.8 769.9M1236.4 761.2L1246.1 764.3M1236.4 761.2L1229.6 768.5M1237.1 762.9L1244.4 764.4M1237.1 762.9L1231.5 768.8M1237.7 764.4L1247.4 765.7M1237.7 764.4L1236.5 772.4M1238.7 766.9L1245.9 769.2M1238.7 766.9L1234.7 771.7M1239.3 768.5L1245.1 769.2M1239.3 768.5L1233.3 774.3" stroke="#446e64" opacity="0.93" stroke-width="1.3"/>
<path d="M1319.0 752.7L1299.9 767.7M1319.3 752.5L1318.9 760.6M1319.3 752.5L1313.4 752.1M1317.4 754.0L1316.7 759.5M1317.4 754.0L1309.2 751.5M1315.9 755.2L1316.1 761.5M1315.9 755.2L1308.6 751.5M1314.3 756.5L1314.9 765.8M1314.3 756.5L1308.5 753.9M1312.5 757.8L1312.7 765.0M1312.5 757.8L1304.2 754.4M1311.4 758.7L1311.2 767.2M1311.4 758.7L1302.4 755.3M1309.4 760.3L1311.7 768.0M1309.4 760.3L1302.1 760.5M1308.3 761.2L1312.1 771.6M1308.3 761.2L1300.4 761.1M1306.3 762.7L1307.7 771.1M1306.3 762.7L1299.5 761.4M1305.1 763.6L1306.4 772.6M1305.1 763.6L1297.0 759.9M1303.1 765.2L1304.8 773.7M1303.1 765.2L1296.1 763.0M1301.7 766.3L1303.0 774.5M1301.7 766.3L1293.4 764.2" stroke="#6a9c92" opacity="0.67" stroke-width="1.3"/>
<path d="M1319.4 750.9L1307.8 728.7M1319.5 751.0L1313.0 748.9M1319.5 751.0L1321.2 743.0M1318.6 749.4L1310.3 748.8M1318.6 749.4L1322.4 742.5M1317.5 747.2L1310.8 745.9M1317.5 747.2L1321.0 740.2M1316.7 745.8L1309.5 743.3M1316.7 745.8L1319.6 738.7M1315.9 744.2L1307.4 744.1M1315.9 744.2L1320.8 735.1M1314.8 742.1L1304.8 743.1M1314.8 742.1L1315.9 733.5M1313.9 740.3L1305.8 738.6M1313.9 740.3L1318.3 734.3M1312.8 738.2L1301.6 738.6M1312.8 738.2L1315.3 729.1M1311.9 736.6L1301.0 735.9M1311.9 736.6L1315.1 727.2M1311.2 735.1L1301.0 734.0M1311.2 735.1L1315.0 727.2M1310.0 733.0L1303.5 729.7M1310.0 733.0L1312.3 724.3M1309.2 731.4L1303.5 731.8M1309.2 731.4L1314.1 726.2" stroke="#446e64" opacity="0.87" stroke-width="1.3"/>
<path d="M1320.9 751.3L1339.5 736.9M1321.0 751.2L1321.2 744.1M1321.0 751.2L1329.4 751.7M1322.2 750.3L1323.3 742.9M1322.2 750.3L1330.0 753.5M1324.4 748.6L1323.9 742.0M1324.4 748.6L1332.7 751.1M1325.4 747.9L1327.4 740.7M1325.4 747.9L1332.9 750.6M1327.5 746.2L1329.2 739.0M1327.5 746.2L1334.8 747.9M1329.0 745.0L1329.8 736.2M1329.0 745.0L1338.9 744.3M1330.1 744.2L1330.1 736.4M1330.1 744.2L1337.3 744.4M1331.8 742.9L1333.4 734.6M1331.8 742.9L1341.6 745.9M1333.4 741.6L1332.9 732.4M1333.4 741.6L1342.1 744.4M1334.9 740.5L1337.2 731.6M1334.9 740.5L1344.2 741.1M1337.0 738.9L1339.5 730.3M1337.0 738.9L1343.0 743.8" stroke="#446e64" opacity="0.84" stroke-width="1.3"/>
<path d="M1320.8 752.8L1336.7 769.3M1320.8 752.8L1325.8 752.3M1320.8 752.8L1320.3 758.1M1322.0 754.0L1329.8 752.9M1322.0 754.0L1317.9 761.4M1323.5 755.6L1330.8 752.8M1323.5 755.6L1321.6 763.1M1325.1 757.2L1334.0 756.1M1325.1 757.2L1326.5 767.3M1326.1 758.3L1335.1 756.9M1326.1 758.3L1321.5 767.6M1327.9 760.2L1335.1 761.5M1327.9 760.2L1326.7 769.7M1329.4 761.7L1340.5 761.9M1329.4 761.7L1327.1 771.6M1330.3 762.7L1338.8 760.2M1330.3 762.7L1328.1 772.2M1332.1 764.6L1339.8 764.1M1332.1 764.6L1333.9 772.3M1333.2 765.7L1340.6 766.8M1333.2 765.7L1331.4 772.1M1334.9 767.4L1340.7 765.1M1334.9 767.4L1332.0 774.8" stroke="#5a8c82" opacity="0.81" stroke-width="1.3"/>
<path d="M1409.5 756.1L1399.3 777.7M1409.5 756.1L1413.7 761.5M1409.5 756.1L1401.7 758.9M1408.6 757.9L1411.2 766.4M1408.6 757.9L1401.6 758.5M1407.8 759.7L1412.1 766.7M1407.8 759.7L1399.9 760.5M1406.8 761.7L1409.6 771.3M1406.8 761.7L1400.1 764.3M1406.0 763.6L1408.9 770.0M1406.0 763.6L1397.9 766.2M1405.3 765.0L1412.1 771.6M1405.3 765.0L1394.4 763.6M1404.4 766.8L1412.5 775.1M1404.4 766.8L1395.5 766.9M1403.6 768.7L1404.7 775.8M1403.6 768.7L1395.1 771.0M1402.6 770.8L1406.4 777.4M1402.6 770.8L1392.4 773.1M1402.0 772.0L1406.6 780.0M1402.0 772.0L1393.7 777.3M1400.9 774.4L1403.5 780.2M1400.9 774.4L1393.1 774.6" stroke="#78a89e" opacity="0.64" stroke-width="1.3"/>
<path d="M1409.3 754.1L1395.0 736.5M1409.5 754.3L1404.3 755.4M1409.5 754.3L1409.3 748.5M1408.0 752.6L1399.7 750.8M1408.0 752.6L1409.2 746.7M1406.9 751.1L1399.5 749.4M1406.9 751.1L1410.2 744.6M1405.4 749.3L1395.1 749.7M1405.4 749.3L1405.4 742.1M1404.0 747.6L1396.7 747.5M1404.0 747.6L1404.7 741.1M1402.9 746.3L1394.9 747.2M1402.9 746.3L1406.8 739.5M1401.8 744.9L1392.1 744.1M1401.8 744.9L1403.0 734.9M1400.4 743.2L1392.9 741.4M1400.4 743.2L1403.8 735.9M1399.2 741.7L1392.5 743.2M1399.2 741.7L1399.6 734.5M1397.7 739.8L1389.1 738.4M1397.7 739.8L1399.8 731.8M1396.9 738.9L1391.4 739.1M1396.9 738.9L1400.1 732.8" stroke="#78a89e" opacity="0.77" stroke-width="1.3"/>
<path d="M1410.9 754.1L1429.9 736.5M1410.7 754.4L1411.0 746.5M1410.7 754.4L1415.7 755.5M1412.3 752.9L1410.9 744.4M1412.3 752.9L1420.9 750.9M1413.9 751.4L1414.6 743.6M1413.9 751.4L1421.8 749.8M1415.6 749.8L1415.1 739.8M1415.6 749.8L1423.3 750.0M1416.8 748.7L1414.2 738.6M1416.8 748.7L1425.3 747.9M1418.4 747.2L1416.8 740.2M1418.4 747.2L1427.0 748.2M1419.5 746.2L1415.2 735.5M1419.5 746.2L1428.2 748.9M1420.9 744.9L1420.6 733.7M1420.9 744.9L1429.5 748.4M1422.9 743.0L1425.0 733.4M1422.9 743.0L1432.8 743.6M1423.9 742.0L1423.8 733.3M1423.9 742.0L1431.0 745.6M1425.6 740.5L1425.3 734.0M1425.6 740.5L1434.9 740.6M1426.8 739.4L1424.1 732.2M1426.8 739.4L1434.0 740.1" stroke="#5a8c82" opacity="0.88" stroke-width="1.3"/>
<path d="M1410.8 755.3L1426.5 761.4M1411.0 755.4L1415.8 751.9M1411.0 755.4L1412.3 762.1M1412.8 756.1L1420.1 752.0M1412.8 756.1L1415.5 760.9M1414.2 756.6L1422.6 753.4M1414.2 756.6L1416.8 763.2M1416.0 757.3L1423.4 752.5M1416.0 757.3L1421.0 765.8M1418.4 758.2L1428.4 755.5M1418.4 758.2L1422.0 766.5M1420.4 759.0L1426.4 755.6M1420.4 759.0L1420.6 767.3M1422.3 759.7L1427.3 756.1M1422.3 759.7L1424.0 767.3M1424.0 760.4L1429.4 757.1M1424.0 760.4L1424.6 766.1" stroke="#4e7c72" opacity="0.94" stroke-width="1.3"/>
<path d="M1045.3 881.1L1052.2 902.3M1045.4 881.3L1051.7 885.3M1045.4 881.3L1043.7 886.1M1046.0 883.1L1053.8 887.5M1046.0 883.1L1040.1 889.3M1046.7 885.2L1055.2 889.0M1046.7 885.2L1042.3 889.8M1047.2 886.8L1054.5 892.9M1047.2 886.8L1045.3 892.6M1047.7 888.4L1057.2 893.1M1047.7 888.4L1040.5 894.7M1048.3 890.3L1054.6 893.7M1048.3 890.3L1041.5 898.9M1049.1 892.8L1056.4 895.6M1049.1 892.8L1042.0 898.6M1049.6 894.4L1059.0 894.4M1049.6 894.4L1044.3 902.8M1050.2 896.0L1058.6 898.8M1050.2 896.0L1046.2 901.6M1050.9 898.1L1057.1 901.0M1050.9 898.1L1046.7 903.5M1051.6 900.5L1059.6 904.0M1051.6 900.5L1047.7 905.1" stroke="#5a8c82" opacity="0.79" stroke-width="1.3"/>
<path d="M1044.1 881.0L1025.5 901.1M1044.2 880.8L1046.5 887.3M1044.2 880.8L1039.3 879.5M1042.8 882.4L1043.5 888.6M1042.8 882.4L1035.8 879.8M1041.4 883.9L1044.0 890.3M1041.4 883.9L1034.5 883.7M1039.8 885.6L1041.7 892.8M1039.8 885.6L1032.9 883.0M1038.7 886.8L1040.2 897.1M1038.7 886.8L1028.7 889.3M1037.4 888.2L1040.4 896.3M1037.4 888.2L1027.9 889.7M1036.1 889.6L1036.4 896.5M1036.1 889.6L1029.1 890.8M1034.7 891.1L1034.9 899.6M1034.7 891.1L1024.5 890.8M1033.3 892.7L1032.5 899.9M1033.3 892.7L1023.6 892.4M1032.0 894.1L1034.1 903.9M1032.0 894.1L1021.8 894.3M1030.5 895.7L1030.3 904.3M1030.5 895.7L1020.5 895.4M1029.3 897.0L1029.0 903.5M1029.3 897.0L1019.6 895.8M1027.9 898.5L1027.4 904.9M1027.9 898.5L1021.4 895.2" stroke="#5a8c82" opacity="0.94" stroke-width="1.3"/>
<path d="M1044.4 879.5L1031.6 869.3M1044.1 879.3L1036.8 881.7M1044.1 879.3L1043.2 872.1M1043.0 878.4L1036.7 878.7M1043.0 878.4L1043.7 869.4M1041.1 876.9L1032.6 876.6M1041.1 876.9L1041.9 867.7M1039.7 875.8L1032.3 878.2M1039.7 875.8L1037.7 865.9M1037.9 874.3L1027.2 878.9M1037.9 874.3L1039.3 862.8M1036.6 873.3L1027.1 872.9M1036.6 873.3L1038.3 865.8M1034.9 872.0L1026.3 876.8M1034.9 872.0L1036.5 866.1M1033.7 871.0L1028.3 872.8M1033.7 871.0L1032.3 863.6" stroke="#6a9c92" opacity="0.76" stroke-width="1.3"/>
<path d="M1045.2 879.1L1049.1 860.8M1045.2 879.2L1039.1 874.0M1045.2 879.2L1050.4 876.7M1045.6 877.3L1040.4 873.0M1045.6 877.3L1053.9 874.5M1046.0 875.2L1038.8 869.2M1046.0 875.2L1052.6 873.1M1046.5 873.1L1043.8 867.4M1046.5 873.1L1052.7 869.3M1046.9 871.0L1040.6 864.4M1046.9 871.0L1056.6 867.5M1047.2 869.6L1043.0 861.0M1047.2 869.6L1053.9 867.1M1047.6 867.6L1041.6 862.2M1047.6 867.6L1055.6 865.1M1048.1 865.3L1043.7 860.5M1048.1 865.3L1054.3 864.6M1048.5 863.5L1042.3 858.8M1048.5 863.5L1055.2 862.6" stroke="#446e64" opacity="0.66" stroke-width="1.3"/>
<path d="M1045.9 879.9L1063.6 878.1M1045.7 879.9L1048.8 873.7M1045.7 879.9L1050.6 883.5M1048.0 879.7L1049.7 873.2M1048.0 879.7L1053.2 882.8M1050.0 879.5L1053.5 871.5M1050.0 879.5L1053.8 887.4M1051.5 879.3L1053.9 871.5M1051.5 879.3L1055.5 885.2M1053.9 879.1L1059.1 871.3M1053.9 879.1L1060.9 883.1M1056.0 878.9L1061.2 873.2M1056.0 878.9L1061.0 885.7M1057.6 878.7L1064.8 871.1M1057.6 878.7L1063.3 883.6M1060.1 878.4L1062.2 870.5M1060.1 878.4L1067.3 882.5" stroke="#4e7c72" opacity="0.72" stroke-width="1.3"/>
<path d="M1099.7 890.9L1093.7 908.6M1099.8 890.6L1104.7 894.9M1099.8 890.6L1092.3 891.6M1099.0 893.0L1101.9 899.6M1099.0 893.0L1091.4 893.8M1098.4 894.7L1103.0 900.5M1098.4 894.7L1091.6 900.1M1097.8 896.6L1103.8 903.4M1097.8 896.6L1090.7 899.0M1097.2 898.2L1101.7 904.1M1097.2 898.2L1088.9 901.4M1096.5 900.4L1100.4 910.1M1096.5 900.4L1087.8 903.8M1096.0 902.0L1103.1 910.3M1096.0 902.0L1087.7 902.7M1095.1 904.4L1099.6 913.1M1095.1 904.4L1086.3 904.5M1094.5 906.2L1099.7 910.4M1094.5 906.2L1086.2 908.6" stroke="#4e7c72" opacity="0.94" stroke-width="1.3"/>
<path d="M1099.1 890.1L1080.5 891.4M1099.3 890.1L1096.7 894.5M1099.3 890.1L1096.2 885.1M1097.3 890.2L1093.1 897.3M1097.3 890.2L1092.5 882.5M1095.2 890.3L1088.7 895.8M1095.2 890.3L1091.1 884.9M1093.4 890.5L1089.5 896.3M1093.4 890.5L1087.2 886.5M1090.7 890.7L1083.0 899.0M1090.7 890.7L1085.3 883.2M1089.3 890.8L1081.2 899.0M1089.3 890.8L1081.0 882.7M1087.1 890.9L1081.0 898.3M1087.1 890.9L1081.1 885.9M1084.7 891.1L1078.8 898.6M1084.7 891.1L1078.8 886.3M1083.0 891.2L1079.5 895.6M1083.0 891.2L1076.4 885.8" stroke="#5a8c82" opacity="0.67" stroke-width="1.3"/>
<path d="M1100.0 889.1L1099.9 871.7M1100.0 889.2L1094.0 885.0M1100.0 889.2L1104.3 885.9M1100.0 887.4L1094.5 881.2M1100.0 887.4L1105.6 882.3M1100.0 884.8L1095.3 879.9M1100.0 884.8L1106.8 881.2M1100.0 883.2L1094.3 879.6M1100.0 883.2L1105.6 877.6M1099.9 881.2L1091.2 874.6M1099.9 881.2L1105.1 873.8M1099.9 879.1L1092.2 870.8M1099.9 879.1L1107.1 870.3M1099.9 876.9L1095.2 872.4M1099.9 876.9L1106.6 874.4M1099.9 874.8L1096.2 870.0M1099.9 874.8L1108.0 871.4" stroke="#4e7c72" opacity="0.61" stroke-width="1.3"/>
<path d="M1100.9 889.7L1118.3 884.6M1100.9 889.7L1105.3 884.2M1100.9 889.7L1105.2 892.6M1102.8 889.2L1105.5 883.1M1102.8 889.2L1110.3 891.9M1104.7 888.6L1107.7 882.5M1104.7 888.6L1108.8 893.1M1106.7 888.0L1109.3 881.1M1106.7 888.0L1112.1 892.9M1108.4 887.5L1112.5 878.4M1108.4 887.5L1115.4 890.7M1110.6 886.9L1116.4 878.8M1110.6 886.9L1120.6 892.5M1112.2 886.4L1116.0 877.9M1112.2 886.4L1117.5 891.8M1114.5 885.7L1118.4 878.4M1114.5 885.7L1121.3 890.9M1116.0 885.3L1117.7 876.5M1116.0 885.3L1121.1 887.8" stroke="#5a8c82" opacity="0.62" stroke-width="1.3"/>
<path d="M1100.7 890.8L1114.5 907.8M1100.5 890.6L1106.6 889.6M1100.5 890.6L1097.3 898.2M1101.8 892.2L1109.0 894.2M1101.8 892.2L1099.3 899.0M1103.3 894.1L1111.7 894.8M1103.3 894.1L1101.2 902.0M1104.7 895.8L1112.7 896.8M1104.7 895.8L1102.2 903.6M1105.7 897.1L1115.3 897.1M1105.7 897.1L1107.0 908.0M1107.2 898.9L1118.1 897.1M1107.2 898.9L1104.4 909.8M1108.2 900.0L1116.8 901.3M1108.2 900.0L1107.7 911.7M1109.6 901.9L1120.4 901.3M1109.6 901.9L1109.4 912.4M1110.8 903.3L1117.1 901.2M1110.8 903.3L1108.1 912.4M1112.2 905.0L1118.3 904.5M1112.2 905.0L1113.0 913.9" stroke="#6a9c92" opacity="0.61" stroke-width="1.3"/>
<path d="M1358.7 720.4L1333.4 728.7M1358.7 720.4L1355.1 727.8M1358.7 720.4L1352.2 716.1M1356.5 721.2L1355.3 728.3M1356.5 721.2L1351.0 717.4M1355.0 721.6L1349.6 729.4M1355.0 721.6L1347.7 717.9M1352.9 722.3L1352.7 731.8M1352.9 722.3L1348.3 717.9M1350.8 723.0L1348.8 729.9M1350.8 723.0L1345.1 717.6M1349.1 723.6L1343.3 731.5M1349.1 723.6L1340.6 717.7M1347.4 724.1L1341.0 731.4M1347.4 724.1L1337.2 719.5M1345.4 724.8L1346.1 736.1M1345.4 724.8L1335.8 722.7M1343.8 725.3L1341.7 733.2M1343.8 725.3L1338.0 721.3M1341.8 726.0L1338.2 733.1M1341.8 726.0L1336.1 722.2M1339.6 726.7L1336.2 736.0M1339.6 726.7L1332.6 723.6M1338.0 727.2L1335.0 732.8M1338.0 727.2L1333.1 724.0M1336.1 727.8L1333.5 734.6M1336.1 727.8L1331.6 723.9" stroke="#4e7c72" opacity="0.74" stroke-width="1.3"/>
<path d="M1359.8 718.9L1355.9 697.3M1359.9 719.3L1354.5 715.1M1359.9 719.3L1366.8 715.4M1359.5 717.0L1352.2 711.9M1359.5 717.0L1362.9 712.4M1359.0 714.8L1352.0 712.4M1359.0 714.8L1365.6 708.7M1358.8 713.4L1351.5 711.6M1358.8 713.4L1364.8 707.4M1358.4 711.3L1352.1 708.9M1358.4 711.3L1366.8 705.8M1358.0 708.8L1347.6 707.2M1358.0 708.8L1365.0 704.5M1357.6 707.1L1349.2 701.9M1357.6 707.1L1361.2 698.8M1357.2 704.9L1350.1 701.9M1357.2 704.9L1365.4 699.9M1356.9 703.2L1349.0 699.3M1356.9 703.2L1364.8 698.0M1356.6 701.1L1351.6 698.4M1356.6 701.1L1361.0 696.8" stroke="#4e7c72" opacity="0.83" stroke-width="1.3"/>
<path d="M1361.0 720.1L1380.4 722.0M1361.2 720.1L1368.0 715.1M1361.2 720.1L1364.0 724.9M1363.1 720.3L1367.9 714.7M1363.1 720.3L1365.6 728.1M1364.8 720.5L1370.2 716.3M1364.8 720.5L1368.3 725.1M1366.7 720.6L1373.4 717.3M1366.7 720.6L1373.7 727.7M1368.6 720.8L1374.4 715.9M1368.6 720.8L1370.9 728.3M1370.6 721.0L1376.1 712.7M1370.6 721.0L1377.0 729.1M1372.7 721.2L1381.4 714.2M1372.7 721.2L1377.5 731.2M1374.8 721.4L1379.0 716.2M1374.8 721.4L1379.5 729.4M1376.8 721.6L1381.9 715.2M1376.8 721.6L1381.1 725.8" stroke="#6a9c92" opacity="0.66" stroke-width="1.3"/>
<path d="M1360.3 720.8L1365.4 736.7M1360.3 721.0L1365.9 725.5M1360.3 721.0L1357.0 728.6M1360.8 722.3L1368.9 723.0M1360.8 722.3L1358.9 727.8M1361.5 724.7L1370.0 729.0M1361.5 724.7L1354.4 729.7M1362.0 726.1L1370.9 726.4M1362.0 726.1L1359.3 734.1M1362.7 728.5L1374.6 728.7M1362.7 728.5L1358.7 735.1M1363.3 730.3L1368.3 735.0M1363.3 730.3L1359.3 737.9M1363.8 731.9L1369.8 735.7M1363.8 731.9L1359.6 737.6M1364.5 734.1L1372.4 737.1M1364.5 734.1L1361.1 741.5" stroke="#6a9c92" opacity="0.68" stroke-width="1.3"/>
<path d="M1260.9 829.2L1279.9 813.6M1260.9 829.2L1262.0 823.3M1260.9 829.2L1266.0 829.7M1262.4 828.1L1261.0 822.3M1262.4 828.1L1271.0 828.6M1263.9 826.8L1265.7 821.3M1263.9 826.8L1270.8 825.4M1265.3 825.6L1268.4 818.0M1265.3 825.6L1275.1 827.6M1267.1 824.1L1267.2 815.3M1267.1 824.1L1276.5 828.8M1269.0 822.6L1268.2 811.9M1269.0 822.6L1275.8 826.5M1270.1 821.6L1268.9 812.3M1270.1 821.6L1281.4 821.6M1271.7 820.3L1269.9 811.2M1271.7 820.3L1278.2 822.6M1273.2 819.1L1274.0 810.7M1273.2 819.1L1282.0 821.3M1274.8 817.8L1274.3 810.2M1274.8 817.8L1283.9 821.0M1276.6 816.3L1276.0 808.4M1276.6 816.3L1284.8 818.5M1278.2 815.0L1276.7 809.0M1278.2 815.0L1286.5 816.3" stroke="#78a89e" opacity="0.86" stroke-width="1.3"/>
<path d="M1260.1 831.3L1262.9 856.9M1260.2 831.4L1263.4 835.2M1260.2 831.4L1255.6 835.2M1260.4 833.4L1268.2 836.8M1260.4 833.4L1253.2 836.8M1260.6 835.0L1267.2 837.2M1260.6 835.0L1256.5 839.5M1260.8 837.3L1266.9 841.7M1260.8 837.3L1256.9 845.6M1261.0 839.1L1269.3 845.6M1261.0 839.1L1253.0 844.6M1261.3 841.5L1268.1 844.7M1261.3 841.5L1256.3 848.2M1261.5 843.4L1268.3 847.0M1261.5 843.4L1255.9 849.4M1261.7 845.3L1269.1 851.9M1261.7 845.3L1253.8 853.2M1261.9 847.2L1268.6 852.2M1261.9 847.2L1255.2 851.3M1262.1 849.5L1271.6 853.8M1262.1 849.5L1257.6 853.8M1262.3 850.8L1267.3 855.9M1262.3 850.8L1255.6 856.3M1262.6 853.3L1270.3 855.6M1262.6 853.3L1258.6 857.2" stroke="#446e64" opacity="0.71" stroke-width="1.3"/>
<path d="M1259.2 829.7L1243.9 823.2M1259.2 829.7L1254.0 831.6M1259.2 829.7L1258.0 823.7M1257.4 828.9L1251.0 830.8M1257.4 828.9L1255.5 822.0M1255.2 828.0L1246.1 830.6M1255.2 828.0L1251.2 818.7M1253.6 827.3L1245.9 834.6M1253.6 827.3L1250.8 819.7M1252.2 826.7L1244.0 833.7M1252.2 826.7L1249.9 815.6M1250.3 825.9L1242.6 829.2M1250.3 825.9L1247.1 817.2M1247.8 824.8L1242.3 828.3M1247.8 824.8L1244.1 818.8M1246.3 824.2L1238.0 828.5M1246.3 824.2L1244.3 817.6" stroke="#6a9c92" opacity="0.80" stroke-width="1.3"/>
<path d="M1030.8 759.7L1047.3 754.6M1031.2 759.6L1034.4 755.2M1031.2 759.6L1037.2 765.3M1033.0 759.1L1038.3 751.9M1033.0 759.1L1038.9 763.8M1034.9 758.5L1039.1 752.7M1034.9 758.5L1039.9 762.6M1036.9 757.9L1040.3 749.5M1036.9 757.9L1041.2 765.2M1038.4 757.4L1040.8 747.8M1038.4 757.4L1043.4 763.2M1040.4 756.8L1041.4 747.5M1040.4 756.8L1047.4 763.2M1042.2 756.2L1045.6 750.9M1042.2 756.2L1051.4 760.3M1043.8 755.7L1045.1 749.7M1043.8 755.7L1048.2 760.2" stroke="#5a8c82" opacity="0.78" stroke-width="1.3"/>
<path d="M1030.4 761.0L1038.9 781.2M1030.6 761.3L1038.3 762.9M1030.6 761.3L1027.1 764.9M1031.2 763.0L1038.1 764.5M1031.2 763.0L1027.9 769.7M1032.0 764.7L1040.7 767.3M1032.0 764.7L1028.8 772.4M1032.7 766.4L1040.7 771.7M1032.7 766.4L1030.7 772.6M1033.4 768.1L1039.4 770.4M1033.4 768.1L1027.4 774.5M1034.2 770.0L1043.4 772.5M1034.2 770.0L1027.4 779.4M1035.2 772.3L1043.3 777.6M1035.2 772.3L1027.6 780.3M1035.7 773.6L1045.4 776.3M1035.7 773.6L1032.7 782.1M1036.7 776.0L1046.9 776.1M1036.7 776.0L1032.8 780.8M1037.4 777.5L1043.0 779.6M1037.4 777.5L1032.2 784.2" stroke="#6a9c92" opacity="0.74" stroke-width="1.3"/>
<path d="M1029.3 760.9L1014.9 779.4M1029.1 761.2L1029.8 766.3M1029.1 761.2L1023.2 761.7M1028.1 762.5L1027.2 770.6M1028.1 762.5L1019.7 762.5M1026.6 764.4L1027.5 770.1M1026.6 764.4L1019.0 761.6M1025.5 765.7L1025.8 773.6M1025.5 765.7L1016.5 767.1M1024.1 767.5L1027.1 775.2M1024.1 767.5L1014.2 766.7M1023.0 769.1L1022.4 780.3M1023.0 769.1L1012.4 768.9M1022.0 770.4L1021.7 778.9M1022.0 770.4L1011.6 771.2M1020.9 771.7L1023.6 778.5M1020.9 771.7L1012.9 772.0M1019.2 773.9L1022.6 781.4M1019.2 773.9L1011.6 776.6M1018.1 775.3L1018.0 782.3M1018.1 775.3L1010.3 775.1M1016.9 776.8L1016.1 785.3M1016.9 776.8L1007.9 774.7" stroke="#78a89e" opacity="0.63" stroke-width="1.3"/>
<path d="M1029.1 759.5L1011.8 749.0M1029.1 759.5L1023.0 763.6M1029.1 759.5L1027.4 753.2M1027.4 758.4L1019.0 760.8M1027.4 758.4L1025.3 750.9M1025.4 757.2L1019.1 758.4M1025.4 757.2L1022.2 750.1M1023.9 756.3L1018.9 760.4M1023.9 756.3L1023.0 746.4M1022.1 755.3L1011.0 756.8M1022.1 755.3L1023.5 746.4M1020.4 754.3L1013.6 758.4M1020.4 754.3L1018.4 745.9M1018.5 753.1L1010.7 754.1M1018.5 753.1L1016.1 743.0M1017.3 752.3L1009.7 757.9M1017.3 752.3L1015.5 742.3M1015.3 751.2L1009.5 752.7M1015.3 751.2L1015.9 743.0M1013.5 750.1L1006.5 755.3M1013.5 750.1L1015.1 744.3" stroke="#446e64" opacity="0.68" stroke-width="1.3"/>
<path d="M1029.9 759.0L1028.6 739.6M1029.9 759.2L1023.4 754.6M1029.9 759.2L1033.6 754.3M1029.8 756.7L1023.9 749.9M1029.8 756.7L1037.1 753.3M1029.6 754.9L1024.5 748.6M1029.6 754.9L1037.2 752.0M1029.5 753.4L1024.4 748.2M1029.5 753.4L1034.5 748.0M1029.4 751.4L1019.8 745.6M1029.4 751.4L1035.8 748.8M1029.2 748.7L1021.0 741.9M1029.2 748.7L1035.4 741.2M1029.1 747.1L1018.4 744.0M1029.1 747.1L1035.9 741.7M1028.9 744.8L1022.5 742.5M1028.9 744.8L1035.4 738.2M1028.8 743.3L1020.9 738.6M1028.8 743.3L1035.8 737.4" stroke="#6a9c92" opacity="0.67" stroke-width="1.3"/>
<path d="M1107.2 654.3L1132.8 645.7M1107.4 654.2L1109.8 648.8M1107.4 654.2L1111.0 658.1M1109.2 653.6L1112.5 647.4M1109.2 653.6L1114.0 658.3M1111.0 653.0L1113.9 644.9M1111.0 653.0L1118.6 655.6M1112.8 652.4L1117.2 646.4M1112.8 652.4L1120.4 658.5M1114.7 651.8L1114.7 645.2M1114.7 651.8L1122.3 655.0M1116.7 651.1L1118.3 641.0M1116.7 651.1L1125.6 655.3M1118.7 650.5L1121.2 642.4M1118.7 650.5L1125.0 654.2M1120.5 649.8L1121.2 641.6M1120.5 649.8L1129.0 654.2M1122.5 649.2L1123.3 640.5M1122.5 649.2L1131.0 653.2M1123.9 648.7L1125.1 640.4M1123.9 648.7L1130.6 656.4M1125.9 648.0L1127.6 640.0M1125.9 648.0L1132.7 653.4M1128.1 647.3L1130.4 642.0M1128.1 647.3L1134.3 651.3M1130.1 646.6L1133.1 639.6M1130.1 646.6L1135.9 650.0" stroke="#243c36" opacity="0.35" stroke-width="1.2"/>
<path d="M1164.3 663.2L1195.7 676.8M1164.1 663.1L1168.7 659.4M1164.1 663.1L1167.7 669.9M1165.9 663.9L1171.6 659.5M1165.9 663.9L1168.8 668.6M1168.2 664.9L1175.2 659.3M1168.2 664.9L1169.5 673.6M1169.9 665.6L1175.8 664.2M1169.9 665.6L1171.5 674.7M1171.6 666.4L1177.5 664.3M1171.6 666.4L1171.7 674.7M1173.6 667.2L1180.6 662.6M1173.6 667.2L1174.7 674.0M1175.4 668.0L1181.7 665.6M1175.4 668.0L1175.8 674.4M1177.2 668.8L1183.1 665.1M1177.2 668.8L1180.2 678.3M1179.1 669.6L1189.2 663.6M1179.1 669.6L1184.4 679.6M1180.9 670.4L1188.3 667.4M1180.9 670.4L1181.5 681.0M1183.0 671.3L1191.3 666.3M1183.0 671.3L1182.6 679.1M1184.3 671.9L1192.6 668.0M1184.3 671.9L1185.2 680.1M1186.1 672.6L1191.2 667.0M1186.1 672.6L1186.8 680.3M1187.9 673.4L1193.1 668.7M1187.9 673.4L1190.5 680.2M1189.7 674.2L1195.5 671.0M1189.7 674.2L1191.8 682.5M1191.9 675.2L1199.5 670.9M1191.9 675.2L1191.7 683.3M1193.3 675.8L1197.4 671.2M1193.3 675.8L1193.8 682.5" stroke="#243c36" opacity="0.35" stroke-width="1.2"/>
<path d="M1238.4 652.2L1261.6 627.8M1238.3 652.4L1237.6 646.0M1238.3 652.4L1246.2 654.7M1239.6 651.0L1239.4 645.9M1239.6 651.0L1247.1 651.1M1241.2 649.3L1239.1 641.9M1241.2 649.3L1248.2 650.0M1242.7 647.7L1242.3 639.9M1242.7 647.7L1249.0 647.2M1244.1 646.3L1244.2 638.4M1244.1 646.3L1252.5 649.0M1245.2 645.1L1242.7 637.3M1245.2 645.1L1252.2 646.0M1246.5 643.7L1245.4 635.5M1246.5 643.7L1254.8 644.3M1247.9 642.3L1249.3 635.1M1247.9 642.3L1256.4 643.4M1249.3 640.7L1246.3 632.9M1249.3 640.7L1256.3 643.8M1250.6 639.4L1248.0 630.1M1250.6 639.4L1258.1 639.8M1252.0 637.9L1250.6 627.9M1252.0 637.9L1259.9 640.5M1253.5 636.2L1252.3 629.7M1253.5 636.2L1260.9 634.8M1255.1 634.6L1255.5 628.5M1255.1 634.6L1261.8 637.6M1256.1 633.6L1253.7 625.5M1256.1 633.6L1263.7 636.6M1257.7 631.9L1258.3 622.3M1257.7 631.9L1266.4 632.2M1259.2 630.2L1255.8 622.0M1259.2 630.2L1266.2 631.3" stroke="#243c36" opacity="0.35" stroke-width="1.2"/>
<path d="M1307.5 680.3L1332.5 699.7M1307.2 680.0L1314.8 676.9M1307.2 680.0L1308.0 685.6M1309.2 681.6L1315.9 679.8M1309.2 681.6L1308.4 689.8M1310.6 682.7L1319.2 683.2M1310.6 682.7L1312.2 691.8M1312.3 684.0L1317.6 682.0M1312.3 684.0L1310.5 692.1M1313.6 685.0L1319.9 683.6M1313.6 685.0L1316.2 692.3M1315.3 686.4L1322.5 684.3M1315.3 686.4L1314.8 696.1M1317.0 687.6L1324.5 688.1M1317.0 687.6L1316.0 695.8M1318.9 689.1L1328.5 684.2M1318.9 689.1L1318.4 698.9M1319.9 689.9L1326.9 687.8M1319.9 689.9L1318.7 701.1M1321.8 691.4L1332.0 691.0M1321.8 691.4L1324.0 701.5M1323.6 692.8L1331.8 687.1M1323.6 692.8L1321.4 701.2M1325.2 694.0L1334.1 689.9M1325.2 694.0L1323.5 702.7M1326.2 694.9L1333.1 694.8M1326.2 694.9L1328.4 703.9M1328.1 696.3L1334.5 695.1M1328.1 696.3L1328.0 704.3M1329.5 697.4L1335.2 695.7M1329.5 697.4L1331.1 703.9" stroke="#243c36" opacity="0.35" stroke-width="1.2"/>
<path d="M1358.3 649.7L1381.7 650.3M1358.3 649.7L1362.0 645.9M1358.3 649.7L1360.9 655.9M1360.2 649.7L1364.3 644.3M1360.2 649.7L1366.3 654.6M1362.1 649.8L1366.0 641.3M1362.1 649.8L1366.1 657.1M1364.1 649.8L1369.2 641.1M1364.1 649.8L1369.3 656.6M1366.7 649.9L1373.0 641.1M1366.7 649.9L1369.1 656.0M1367.9 649.9L1373.7 646.3M1367.9 649.9L1373.2 656.5M1370.6 650.0L1375.9 643.2M1370.6 650.0L1380.7 656.2M1372.1 650.1L1380.7 643.8M1372.1 650.1L1377.8 657.5M1374.0 650.1L1380.1 642.0M1374.0 650.1L1381.3 656.9M1376.5 650.2L1381.2 645.5M1376.5 650.2L1378.8 658.8M1378.0 650.2L1384.2 646.0M1378.0 650.2L1380.5 655.3" stroke="#243c36" opacity="0.35" stroke-width="1.2"/>
<path d="M1052.2 696.2L1067.8 663.8M1052.4 695.8L1050.4 689.3M1052.4 695.8L1058.2 694.8M1053.2 694.0L1050.8 688.4M1053.2 694.0L1060.6 692.7M1053.9 692.6L1049.6 685.7M1053.9 692.6L1059.5 690.2M1054.9 690.6L1051.2 681.7M1054.9 690.6L1062.7 688.5M1055.9 688.6L1055.4 679.6M1055.9 688.6L1062.8 687.7M1056.4 687.4L1055.0 679.3M1056.4 687.4L1063.0 685.3M1057.3 685.6L1056.2 676.9M1057.3 685.6L1065.3 682.4M1058.3 683.5L1052.1 675.9M1058.3 683.5L1068.1 682.8M1059.1 681.8L1054.0 672.3M1059.1 681.8L1067.9 679.4M1060.2 679.6L1054.0 670.5M1060.2 679.6L1070.9 674.6M1060.7 678.5L1056.6 667.8M1060.7 678.5L1069.4 675.1M1061.6 676.6L1060.0 666.0M1061.6 676.6L1072.0 675.4M1062.6 674.6L1059.5 668.7M1062.6 674.6L1068.3 671.0M1063.4 673.0L1060.4 664.9M1063.4 673.0L1070.0 673.5M1064.3 671.1L1062.1 665.7M1064.3 671.1L1071.4 669.0M1065.3 668.9L1063.0 660.7M1065.3 668.9L1072.0 666.9M1066.1 667.4L1062.9 662.7M1066.1 667.4L1073.4 666.3" stroke="#243c36" opacity="0.35" stroke-width="1.2"/>
<path d="M1202.9 624.4L1217.1 595.6M1202.8 624.6L1199.0 618.3M1202.8 624.6L1209.2 623.9M1203.7 622.7L1202.7 616.3M1203.7 622.7L1210.3 618.8M1204.7 620.6L1203.0 615.0M1204.7 620.6L1211.2 618.2M1205.4 619.3L1205.1 613.4M1205.4 619.3L1212.1 618.5M1206.6 616.9L1205.6 607.5M1206.6 616.9L1212.7 614.3M1207.4 615.3L1201.6 607.0M1207.4 615.3L1215.4 611.9M1208.1 613.9L1202.5 606.0M1208.1 613.9L1216.8 612.2M1209.1 611.9L1203.5 604.9M1209.1 611.9L1216.5 611.3M1209.9 610.1L1207.2 598.8M1209.9 610.1L1221.8 609.2M1211.0 608.0L1205.6 600.0M1211.0 608.0L1221.8 606.2M1211.7 606.6L1207.4 596.7M1211.7 606.6L1220.1 605.9M1212.7 604.5L1207.5 595.5M1212.7 604.5L1218.6 600.8M1213.4 603.1L1210.4 595.5M1213.4 603.1L1222.0 599.5M1214.5 601.0L1213.3 593.5M1214.5 601.0L1222.9 601.3M1215.4 599.0L1210.8 591.4M1215.4 599.0L1221.3 599.3M1216.2 597.6L1214.2 591.9M1216.2 597.6L1224.9 598.8" stroke="#243c36" opacity="0.35" stroke-width="1.2"/>
<path d="M1278.4 607.8L1301.6 612.2M1278.0 607.7L1284.1 603.6M1278.0 607.7L1280.2 613.9M1280.6 608.2L1284.3 600.3M1280.6 608.2L1285.3 612.6M1282.0 608.5L1287.3 603.2M1282.0 608.5L1284.6 617.4M1284.1 608.9L1291.0 603.7M1284.1 608.9L1286.8 614.8M1286.6 609.4L1291.8 603.5M1286.6 609.4L1293.3 616.2M1288.1 609.6L1295.5 606.0M1288.1 609.6L1292.7 615.4M1289.9 610.0L1295.3 603.4M1289.9 610.0L1292.1 621.5M1291.8 610.4L1298.4 603.9M1291.8 610.4L1294.0 619.3M1293.8 610.7L1301.6 606.9M1293.8 610.7L1297.4 619.8M1295.9 611.1L1301.6 604.9M1295.9 611.1L1303.0 618.2M1298.1 611.5L1301.3 606.2M1298.1 611.5L1301.7 616.0" stroke="#243c36" opacity="0.35" stroke-width="1.2"/>
<path d="M1390.7 619.1L1409.3 640.9M1390.5 618.8L1397.6 617.9M1390.5 618.8L1388.9 623.9M1392.2 620.8L1400.6 619.5M1392.2 620.8L1391.4 628.5M1393.1 621.9L1399.1 621.0M1393.1 621.9L1390.9 630.4M1394.8 623.9L1402.2 621.4M1394.8 623.9L1394.6 631.8M1395.9 625.2L1405.1 625.4M1395.9 625.2L1395.8 633.8M1397.5 627.0L1408.1 627.5M1397.5 627.0L1394.0 637.1M1398.5 628.2L1409.4 628.7M1398.5 628.2L1396.9 635.8M1399.8 629.7L1407.9 629.8M1399.8 629.7L1398.3 640.4M1401.3 631.5L1412.1 630.1M1401.3 631.5L1397.8 641.6M1402.3 632.7L1412.3 634.9M1402.3 632.7L1397.5 641.6M1403.9 634.6L1411.6 636.2M1403.9 634.6L1402.2 642.0M1405.0 635.9L1412.4 634.9M1405.0 635.9L1405.7 644.0M1406.2 637.3L1412.0 637.8M1406.2 637.3L1406.9 643.2M1407.6 638.9L1414.4 637.9M1407.6 638.9L1404.4 644.3" stroke="#243c36" opacity="0.35" stroke-width="1.2"/>
<path d="M1349.4 600.5L1370.6 579.5M1349.2 600.7L1348.1 592.8M1349.2 600.7L1356.6 604.0M1350.9 599.1L1347.9 590.8M1350.9 599.1L1357.1 600.8M1352.4 597.6L1349.0 590.7M1352.4 597.6L1359.7 596.5M1353.8 596.1L1353.7 590.0M1353.8 596.1L1361.9 596.1M1355.1 594.9L1356.0 585.4M1355.1 594.9L1363.3 594.5M1356.3 593.6L1357.2 586.5M1356.3 593.6L1366.7 595.3M1358.1 591.9L1360.1 584.5M1358.1 591.9L1369.3 593.1M1359.2 590.8L1360.1 581.7M1359.2 590.8L1369.8 593.8M1360.9 589.1L1360.0 579.3M1360.9 589.1L1367.5 591.6M1362.0 588.0L1358.7 581.0M1362.0 588.0L1370.3 591.8M1363.3 586.7L1363.5 575.9M1363.3 586.7L1372.0 586.4M1365.0 585.1L1361.2 576.3M1365.0 585.1L1374.9 585.8M1366.2 583.8L1363.1 576.7M1366.2 583.8L1373.0 583.2M1368.0 582.1L1368.8 573.3M1368.0 582.1L1375.5 583.1" stroke="#243c36" opacity="0.35" stroke-width="1.2"/></g>
<!-- hair -->
<g filter="url(#b5)">
<path d="M812 712 C800 740 796 780 792 820 C788 850 782 880 778 900 L900 900 L895 850 L880 800 L870 735 Z" fill="#7a6048"/>
<path d="M966 700 C988 730 998 780 1006 830 C1012 860 1022 880 1030 900 L945 900 L948 800 Z" fill="#94795e"/>
<path d="M812 705 C830 700 850 696 870 694 L866 736 L806 736 Z" fill="#a89272"/>
</g>
<g filter="url(#hairtx)" opacity="0.5"><path d="M812 712 C800 740 796 780 792 820 C788 850 782 880 778 900 L900 900 L880 800 L870 735 Z M966 700 C988 730 998 780 1006 830 C1012 860 1022 880 1030 900 L945 900 L948 800 Z" fill="#000"/></g>
<!-- face -->
<g filter="url(#b2)">
<path d="M862 692 C895 684 930 688 966 702 C976 740 978 780 970 812 L920 820 L880 760 Z" fill="#b9998a"/>
</g>
<path d="M931 739 C940 735 953 735 961 740 C953 744 940 744 931 739 Z" fill="#2a1e1e" filter="url(#b1)"/>
<path d="M928 731 C938 726 952 726 962 731" stroke="#5a4036" stroke-width="2" fill="none" filter="url(#b1)"/>
<!-- beanie -->
<path id="bean" d="M845 596 C868 588 900 586 935 592 C960 600 978 625 988 665 C996 700 1000 730 999 750 C990 728 978 712 962 703 C940 694 920 690 900 690 C875 690 845 697 825 708 C815 714 810 718 807 722 C806 695 808 665 814 642 C820 620 832 603 845 596 Z" fill="#bc2f2a"/>
<g filter="url(#knit)"><path d="M845 596 C868 588 900 586 935 592 C960 600 978 625 988 665 C996 700 1000 730 999 750 C990 728 978 712 962 703 C940 694 920 690 900 690 C875 690 845 697 825 708 C815 714 810 718 807 722 C806 695 808 665 814 642 C820 620 832 603 845 596 Z" fill="#000"/></g>
<path d="M807 722 C830 705 870 690 905 690 C945 692 980 710 999 750 L998 740 C985 708 950 684 905 682 C862 683 828 698 808 712 Z" fill="#5e2420" filter="url(#b1)"/>
<!-- camera -->
<g>
<rect x="752" y="728" width="162" height="84" rx="3" fill="#3a3a3c"/>
<rect x="770" y="732" width="106" height="78" fill="#929294"/>
<rect x="752" y="722" width="32" height="12" rx="2" fill="#5a5a5c"/>
<rect x="815" y="725" width="36" height="7" fill="#7a7a7c"/>
<rect x="880" y="724" width="32" height="10" fill="#5a5a5c"/>
<rect x="874" y="748" width="38" height="60" fill="#2c2c2e"/>
<rect x="874" y="734" width="24" height="14" fill="#a4a4a6"/>
<rect x="880" y="737" width="14" height="8" fill="#222"/>
<rect x="781" y="742" width="20" height="16" fill="#b8b8ba"/>
<rect x="785" y="746" width="12" height="8" fill="#333"/>
<circle cx="842" cy="780" r="30" fill="#858587"/>
<circle cx="842" cy="780" r="25" fill="#1a1a1c"/>
<circle cx="842" cy="780" r="14" fill="#24282c"/>
<ellipse cx="846" cy="772" rx="5" ry="3" fill="#b0b8bc"/>
</g>
<!-- left hand -->
<path d="M732 722 C733 713 742 710 756 710 L780 712 C787 714 787 722 781 724 L760 727 C748 731 744 742 742 752 C760 752 785 768 808 786 C812 792 806 798 794 797 C800 805 796 814 788 817 C784 840 778 860 768 884 L770 900 L721 900 L725 882 C724 860 722 840 715 812 C708 798 702 786 707 780 C716 772 728 765 732 752 Z" fill="#c4b4ac"/>
<g filter="url(#b1)" stroke="#8e7e78" stroke-width="1.8" fill="none">
<path d="M712 786 C735 786 765 790 794 797"/>
<path d="M716 806 C740 808 765 812 788 817"/>
<path d="M728 850 C740 855 752 858 762 856"/>
</g>
<!-- right hand -->
<path d="M903 718 C906 712 914 712 918 720 C926 745 936 768 946 782 C958 792 968 798 972 806 C980 822 990 840 1005 860 C1018 878 1030 890 1036 900 L948 900 C938 885 928 870 915 852 C905 838 896 822 893 806 C894 798 900 793 906 790 C912 775 911 760 908 748 C905 738 902 728 903 718 Z" fill="#c9bab3"/>
<g filter="url(#b1)" stroke="#8e7e78" stroke-width="1.8" fill="none">
<path d="M895 806 C915 802 940 800 968 803"/>
<path d="M905 838 C925 834 945 832 962 836"/>
</g>
<!-- shirt -->
<path d="M1024 860 C1050 858 1080 872 1098 900 L1036 900 Z" fill="#3e4e70" filter="url(#b1)"/>
<path d="M712 888 C730 886 755 885 772 884 L774 900 L710 900 Z" fill="#b8b4b8" filter="url(#b1)"/>
<path d="M712 889 C730 887 755 886 772 885" stroke="#4a5a7c" stroke-width="2" fill="none"/>
<!-- bokeh -->
<g filter="url(#b2)" opacity="0.5"><ellipse cx="1020" cy="588" rx="6" ry="7" fill="#7a90a8"/><ellipse cx="1040" cy="586" rx="6" ry="7" fill="#7a90a8"/></g>
<rect x="372" y="551" width="1047" height="1" fill="#2a1a0a"/>
</svg>

<div class="t" style="left:656px;top:565px;font-family:'Liberation Serif',serif;font-size:15px;color:#f4f0ea">Attic <span style="font-size:10px;font-style:italic">&amp;</span> Button</div>
<div class="t" style="left:913px;top:570px;font-size:7.6px;letter-spacing:0.6px;color:#dcdcdc">HOME</div>
<div class="t" style="left:955px;top:570px;font-size:7.6px;letter-spacing:0.6px;color:#dcdcdc">CATALOG</div>
<div class="t" style="left:1009px;top:570px;font-size:7.6px;letter-spacing:0.6px;color:#dcdcdc">BLOG</div>
<div class="t" style="left:1048px;top:570px;font-size:7.6px;letter-spacing:0.6px;color:#dcdcdc">ABOUT US</div>
<svg class="abs" style="left:1102px;top:566px" width="34" height="12" viewBox="0 0 34 12"><circle cx="5.5" cy="3" r="2.3" fill="#eee"/><path d="M1.5 10 C1.5 6.5 9.5 6.5 9.5 10 Z" fill="#eee"/><path d="M21 2.5 H23 L25 8 H31 L32.5 4 H24" stroke="#eee" stroke-width="1.4" fill="none"/><circle cx="26" cy="10" r="1" fill="#eee"/><circle cx="30" cy="10" r="1" fill="#eee"/></svg>
<div class="t" style="left:827px;top:784px;font-size:9px;letter-spacing:0.78px;color:#d6d2ce">GEAR FOR EVERY SEASON</div>
<div class="t" style="left:779px;top:802px;font-family:'Liberation Serif',serif;font-size:33px;color:#fff">Stylish new looks</div>
<div class="abs" style="left:864px;top:851px;width:64px;height:22px;background:#160e0e"></div>
<div class="t" style="left:874px;top:859px;font-size:6.5px;letter-spacing:0.6px;color:#f0f0f0">SHOP NOW</div>

<div class="abs" style="left:1419px;top:498px;width:17px;height:402px;background:#f1f1f1;border-right:1px solid #e0e0e0"></div>
<div class="abs" style="left:1421px;top:516px;width:13px;height:25px;background:#c1c1c1"></div>
<svg class="abs" style="left:1419px;top:498px" width="17" height="402" viewBox="0 0 17 402"><path d="M4.8 12.8 L8.5 8.6 L12.2 12.8 Z" fill="#a3a3a3"/><path d="M4.8 395.6 L8.5 399.8 L12.2 395.6 Z" fill="#505050"/></svg>

</body></html>
